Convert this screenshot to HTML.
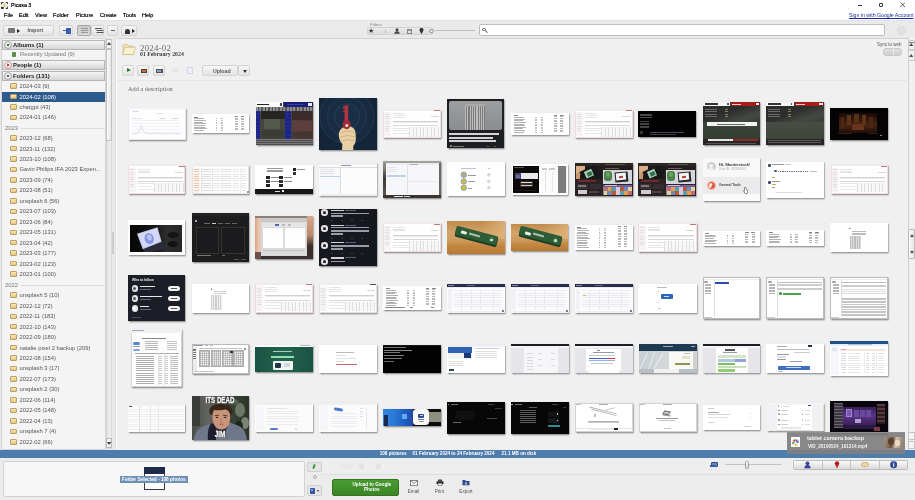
<!DOCTYPE html><html><head><meta charset="utf-8"><title>Picasa 3</title><style>
*{box-sizing:border-box;margin:0;padding:0}
html,body{width:915px;height:500px;overflow:hidden;background:#fff}
body{font-family:"Liberation Sans",sans-serif;font-size:6.5px;color:#222;position:relative;filter:blur(.25px)}
.abs,.abs>*{position:absolute}
#title{left:11px;top:1.2px;font-size:5.3px;color:#000;text-shadow:0 0 .4px #333;line-height:8px}
.menu{top:11px;font-size:6.2px;color:#000;text-shadow:0 0 .4px #444;line-height:8px;transform:scaleX(.9);transform-origin:0 0}
#toolbar{left:0;top:20px;width:915px;height:18px;background:#eaeaea;border-top:1px solid #e2e2e2}
.tb{background:linear-gradient(#f6f6f6,#e4e4e4);border:0.8px solid #d4d4d4;border-radius:2px}
#left{left:0;top:38px;width:115px;height:412px;background:#e9e9ea}
#tree{left:2px;top:1px;width:103px;height:410px;background:#f4f4f4;box-shadow:0 0 0 1px #d6d6d6;overflow:hidden}
.hdr{left:0;width:103px;height:10px;background:linear-gradient(#f6f6f6,#d6d6d6);border:1px solid #b5b5b5;font-weight:bold;font-size:5.9px;line-height:8.3px;padding-left:10px;color:#222}
.it{left:0;width:103px;height:10.4px;font-size:5.8px;line-height:10.4px;padding-left:17.5px;color:#555;white-space:nowrap}
.yr{left:0;width:103px;height:10.4px;font-size:5.8px;line-height:10.4px;padding-left:3px;color:#777}
.fold{left:8px;width:7px;height:5.5px;background:linear-gradient(#f6e6b8,#e6c680);border:0.5px solid #bea060;border-radius:1px}
#main{left:115px;top:38px;width:800px;height:412px;background:#f0f0f1}
.th{box-shadow:0.7px 1px 1.6px rgba(0,0,0,.55);overflow:hidden;background:#fff}
.th>*{position:absolute}
.th{filter:blur(.3px)}
#status{left:0;top:450px;width:915px;height:7.5px;background:#4e7cad}
#bottom{left:0;top:457.5px;width:915px;height:42.5px;background:#ececec}
</style></head><body class="abs">
<svg style="left:1px;top:1.6px" width="7.2" height="7" viewBox="0 0 7.2 7"><rect x="0.6" y="0.6" width="6" height="5.8" fill="#f6f4d8"/><path d="M0.5 2.2 L0.5 0.5 L2.4 0.5 M4.8 0.5 L6.7 0.5 L6.7 2.2 M6.7 4.6 L6.7 6.5 L4.8 6.5 M2.4 6.5 L0.5 6.5 L0.5 4.6" stroke="#2a2a2a" stroke-width="1" fill="none"/><rect x="2.6" y="2.4" width="2" height="2" fill="#b8c070"/><rect x="0.3" y="5" width="2.4" height="1.6" fill="#333"/></svg>
<div id="title">Picasa 3</div>
<div class="menu" style="left:3.6px">File</div>
<div class="menu" style="left:18.6px">Edit</div>
<div class="menu" style="left:34.8px">View</div>
<div class="menu" style="left:53px">Folder</div>
<div class="menu" style="left:75.6px">Picture</div>
<div class="menu" style="left:100px">Create</div>
<div class="menu" style="left:123px">Tools</div>
<div class="menu" style="left:142px">Help</div>
<div style="left:858px;top:5px;width:4px;height:0.8px;background:#333"></div>
<div style="left:878.5px;top:2.5px;width:4px;height:4px;border:0.8px solid #333;border-radius:1px"></div>
<svg style="left:899.5px;top:2.2px" width="5.4" height="5.4" viewBox="0 0 5.4 5.4"><path d="M0.4 0.4 L5 5 M5 0.4 L0.4 5" stroke="#333" stroke-width="0.8"/></svg>
<div style="left:849px;top:12px;font-size:5.2px;line-height:7px;color:#1a2a9a;text-decoration:underline;white-space:nowrap">Sign in with Google Account</div>
<div id="toolbar" class="abs">
<div class="tb abs" style="left:3px;top:3.5px;width:51px;height:11.5px;"><span style="left:23.5px;top:1.8px;font-size:5px;font-weight:bold;color:#555;line-height:7px">Import</span><span style="left:4px;top:2.5px;width:7px;height:5px;background:#777;border-radius:1px"></span><span style="left:12.5px;top:3px;border-left:3px solid #222;border-top:2px solid transparent;border-bottom:2px solid transparent"></span></div>
<div class="tb abs" style="left:59px;top:3.5px;width:13.5px;height:11.5px;"><span style="left:6px;top:2.5px;width:5px;height:5.5px;background:#3b5fae"></span><span style="left:2.5px;top:4.5px;width:3px;height:1px;background:#3b5fae"></span></div>
<div class="tb abs" style="left:77px;top:3.5px;width:13.5px;height:11.5px;background:linear-gradient(#c9c9c9,#dadada);border-color:#aaa"><span style="left:2.5px;top:2.5px;width:7.5px;height:1px;background:#999;box-shadow:0 2px 0 #999,0 4px 0 #999"></span></div>
<div class="tb abs" style="left:90.5px;top:3.5px;width:13px;height:11.5px;"><span style="left:3px;top:2.5px;width:7px;height:1px;background:#555;box-shadow:1.5px 2px 0 #555,1.5px 4px 0 #555"></span></div>
<div class="tb abs" style="left:107px;top:3.5px;width:10.5px;height:11.5px;"><span style="left:3px;top:4.5px;width:3.5px;height:1px;background:#666"></span></div>
<div class="tb abs" style="left:121px;top:3.5px;width:16px;height:11.5px;"><span style="left:3px;top:3px;width:5px;height:5px;background:#333;border-radius:2.5px 2.5px 0 0"></span><span style="left:10px;top:3.5px;border-left:3px solid #222;border-top:2px solid transparent;border-bottom:2px solid transparent"></span></div>
<span style="left:370px;top:0.6px;font-size:4.4px;line-height:5px;color:#888">Filters</span>
<div style="left:367px;top:6px;width:66px;height:8px;background:linear-gradient(#ececec,#dcdcdc);border:0.7px solid #d2d2d2;border-radius:2px"></div>
<span style="left:368.3px;top:5.4px;font-size:6.6px;line-height:9px;color:#333">★</span>
<span style="left:385px;top:8.5px;width:0.8px;height:3px;background:#bbb"></span>
<svg style="left:394px;top:7px" width="6" height="6" viewBox="0 0 6 6"><circle cx="3" cy="1.7" r="1.5" fill="#444"/><path d="M0.3 5.8 Q0.3 3.3 3 3.3 Q5.7 3.3 5.7 5.8 Z" fill="#444"/></svg>
<span style="left:406.5px;top:7.5px;width:5px;height:5px;border:0.8px solid #888;background:repeating-linear-gradient(#999 0 0.8px,transparent 0.8px 1.7px)"></span>
<svg style="left:419px;top:7px" width="5" height="6.5" viewBox="0 0 5 6.5"><path d="M2.5 6.3 L0.7 2.8 A2 2 0 1 1 4.3 2.8 Z" fill="#333"/></svg>
<span style="left:429px;top:7.5px;width:4.5px;height:4.5px;border:0.7px solid #999;border-radius:3px;background:#eee"></span>
<div style="left:434.5px;top:9.3px;width:40.5px;height:1px;background:#bdbdbd"></div>
<div style="left:478.5px;top:3px;width:406.5px;height:12px;background:#fff;border:1px solid #bdbdbd;border-radius:2px"></div>
<span style="left:482px;top:6.5px;width:3.5px;height:3.5px;border:0.9px solid #555;border-radius:2px"></span><span style="left:485px;top:10px;width:2.5px;height:1px;background:#555;transform:rotate(45deg)"></span>
<span style="left:897px;top:5px;width:9px;height:9px;border-radius:5px;background:#e2e2e2;border:1px solid #dadada"></span>
</div>
<div id="left" class="abs"><div id="tree" class="abs">
<div class="hdr" style="top:0.5px">Albums (1)</div>
<svg style="left:1.8px;top:1.5px" width="8" height="8" viewBox="0 0 8 8"><circle cx="4" cy="4" r="3.4" fill="#fcfcfc" stroke="#5a8a4a" stroke-width="0.7"/><path d="M2.3 3.3 L5.7 3.3 L4 5.6 Z" fill="#333"/></svg>
<div class="it" style="top:10.3px;padding-left:18px;color:#777">Recently Updated (9)</div>
<div style="left:9.5px;top:12.5px;width:4.5px;height:5.5px;background:#5e8a4c;border-radius:1px"></div>
<div class="hdr" style="top:21.2px">People (1)</div>
<svg style="left:1.8px;top:22.2px" width="8" height="8" viewBox="0 0 8 8"><circle cx="4" cy="4" r="3.4" fill="#fcfcfc" stroke="#b66" stroke-width="0.7"/><path d="M3.2 2.3 L3.2 5.7 L5.6 4 Z" fill="#b01515"/></svg>
<div class="hdr" style="top:31.6px">Folders (131)</div>
<svg style="left:1.8px;top:32.6px" width="8" height="8" viewBox="0 0 8 8"><circle cx="4" cy="4" r="3.4" fill="#fcfcfc" stroke="#777" stroke-width="0.7"/><path d="M2.3 3.3 L5.7 3.3 L4 5.6 Z" fill="#333"/></svg>
<div class="it" style="top:41.8px;color:#555">2024-03 (9)</div>
<div class="fold" style="top:44.099999999999994px"></div>
<div style="left:0;top:52.8px;width:103px;height:10px;background:#2d5b8e"></div>
<div class="it" style="top:52.5px;color:#fff">2024-02 (108)</div>
<div class="fold" style="top:54.8px"></div>
<div class="it" style="top:63.0px;color:#555">chatgpt (43)</div>
<div class="fold" style="top:65.3px"></div>
<div class="it" style="top:73.3px;color:#555">2024-01 (146)</div>
<div class="fold" style="top:75.6px"></div>
<div class="yr" style="top:83.6px">2023</div><div style="left:19px;top:88.8px;width:84px;height:0.8px;background:#dcdcdc"></div>
<div class="it" style="top:94.1px;color:#555">2023-12 (68)</div>
<div class="fold" style="top:96.39999999999999px"></div>
<div class="it" style="top:104.6px;color:#555">2023-11 (132)</div>
<div class="fold" style="top:106.89999999999999px"></div>
<div class="it" style="top:115.0px;color:#555">2023-10 (108)</div>
<div class="fold" style="top:117.3px"></div>
<div class="it" style="top:125.4px;color:#555">Gavin Philips IFA 2023 Expen...</div>
<div class="fold" style="top:127.7px"></div>
<div class="it" style="top:135.8px;color:#555">2023-09 (74)</div>
<div class="fold" style="top:138.10000000000002px"></div>
<div class="it" style="top:146.2px;color:#555">2023-08 (51)</div>
<div class="fold" style="top:148.5px"></div>
<div class="it" style="top:156.8px;color:#555">unsplash 6 (56)</div>
<div class="fold" style="top:159.10000000000002px"></div>
<div class="it" style="top:167.3px;color:#555">2023-07 (103)</div>
<div class="fold" style="top:169.60000000000002px"></div>
<div class="it" style="top:177.8px;color:#555">2023-06 (84)</div>
<div class="fold" style="top:180.10000000000002px"></div>
<div class="it" style="top:188.2px;color:#555">2023-05 (131)</div>
<div class="fold" style="top:190.5px"></div>
<div class="it" style="top:198.6px;color:#555">2023-04 (42)</div>
<div class="fold" style="top:200.9px"></div>
<div class="it" style="top:209.1px;color:#555">2023-03 (177)</div>
<div class="fold" style="top:211.4px"></div>
<div class="it" style="top:219.6px;color:#555">2023-02 (123)</div>
<div class="fold" style="top:221.9px"></div>
<div class="it" style="top:230.1px;color:#555">2023-01 (100)</div>
<div class="fold" style="top:232.4px"></div>
<div class="yr" style="top:240.7px">2022</div><div style="left:19px;top:245.89999999999998px;width:84px;height:0.8px;background:#dcdcdc"></div>
<div class="it" style="top:251.1px;color:#555">unsplash 5 (10)</div>
<div class="fold" style="top:253.4px"></div>
<div class="it" style="top:261.7px;color:#555">2022-12 (72)</div>
<div class="fold" style="top:264.0px"></div>
<div class="it" style="top:272.2px;color:#555">2022-11 (183)</div>
<div class="fold" style="top:274.5px"></div>
<div class="it" style="top:282.6px;color:#555">2022-10 (143)</div>
<div class="fold" style="top:284.90000000000003px"></div>
<div class="it" style="top:293.1px;color:#555">2022-09 (180)</div>
<div class="fold" style="top:295.40000000000003px"></div>
<div class="it" style="top:303.6px;color:#555">natalie pixel 2 backup (209)</div>
<div class="fold" style="top:305.90000000000003px"></div>
<div class="it" style="top:314.1px;color:#555">2022-08 (154)</div>
<div class="fold" style="top:316.40000000000003px"></div>
<div class="it" style="top:324.4px;color:#555">unsplash 3 (17)</div>
<div class="fold" style="top:326.7px"></div>
<div class="it" style="top:334.8px;color:#555">2022-07 (173)</div>
<div class="fold" style="top:337.1px"></div>
<div class="it" style="top:345.3px;color:#555">unsplash 2 (30)</div>
<div class="fold" style="top:347.6px"></div>
<div class="it" style="top:355.8px;color:#555">2022-06 (114)</div>
<div class="fold" style="top:358.1px"></div>
<div class="it" style="top:366.3px;color:#555">2022-05 (148)</div>
<div class="fold" style="top:368.6px"></div>
<div class="it" style="top:376.8px;color:#555">2022-04 (13)</div>
<div class="fold" style="top:379.1px"></div>
<div class="it" style="top:387.4px;color:#555">unsplash 7 (4)</div>
<div class="fold" style="top:389.7px"></div>
<div class="it" style="top:398.0px;color:#555">2022-02 (66)</div>
<div class="fold" style="top:400.3px"></div>
</div>
<div style="left:105.5px;top:1px;width:6.5px;height:410px;background:linear-gradient(90deg,#e2e2e5,#f1f1f2);border:0.6px solid #d8d8d8"></div>
<div style="left:105.5px;top:11px;width:6.5px;height:92px;background:linear-gradient(90deg,#fbfbfb,#e6e6e6);border:1px solid #c2c2c2"></div>
<div style="left:105.5px;top:1px;width:6.5px;height:10px;background:#f4f4f4;border:1px solid #c2c2c2"></div>
<svg style="left:106.7px;top:4.2px" width="4.2" height="3" viewBox="0 0 4.2 3"><polygon points="0,3 2.1,0 4.2,3" fill="#444"/></svg>
<div style="left:105.5px;top:400px;width:6.5px;height:10px;background:#f4f4f4;border:1px solid #b9b9b9"></div>
<svg style="left:106.7px;top:404px" width="4.2" height="3" viewBox="0 0 4.2 3"><polygon points="0,0 4.2,0 2.1,3" fill="#444"/></svg>
<div style="left:112.3px;top:194px;width:1.6px;height:22px;background:#cdcdcd"></div>
</div>
<div id="main" class="abs">
<div style="left:0;top:0;width:800px;height:0.9px;background:#d2d2d2"></div>
<div style="left:0;top:0;width:1.2px;height:412px;background:#e0e0e1"></div><div style="left:1.2px;top:0;width:1px;height:412px;background:#f8f8f8"></div>
<svg style="left:7px;top:5px" width="15" height="13" viewBox="0 0 15 13"><path d="M1 2.2 L1 11.6 L11.6 11.6 L11.6 3.2 L6.4 3.2 L5.4 1.6 L1.6 1.6 Z" fill="#efe3b4" stroke="#c2ae74" stroke-width="0.6"/><path d="M1 11.6 L2.6 4.6 L13.6 4.2 L11.6 11.6 Z" fill="#f8f0cf" stroke="#c9b77e" stroke-width="0.6"/></svg>
<div style="left:25px;top:4.5px;font-family:'Liberation Serif',serif;font-size:8.8px;line-height:10px;color:#6a6a6a;letter-spacing:.25px">2024-02</div>
<div style="left:25px;top:13px;font-family:'Liberation Serif',serif;font-size:5.8px;line-height:7px;color:#3c3c3c;font-weight:bold">01 February 2024</div>
<div class="tb abs" style="left:6.5px;top:26.5px;width:12px;height:11.5px"><span style="left:4px;top:2.7px;border-left:4px solid #2b7a2b;border-top:2.5px solid transparent;border-bottom:2.5px solid transparent"></span></div>
<div class="tb abs" style="left:22px;top:26.5px;width:12px;height:11.5px"><span style="left:2.5px;top:3px;width:6px;height:4.5px;background:#444"></span><span style="left:3.5px;top:4px;width:4px;height:2px;background:#d9662a"></span></div>
<div class="tb abs" style="left:37.5px;top:26.5px;width:12px;height:11.5px"><span style="left:2px;top:3px;width:7px;height:4.5px;background:#555"></span><span style="left:3.5px;top:4px;width:4px;height:2.5px;background:#8aa0c8"></span></div>
<div style="left:57px;top:29px;width:6px;height:6px;border-radius:3px;background:#e6e6e6"></div>
<div style="left:72px;top:29px;width:6px;height:6.5px;border:0.8px solid #d3d7e2;background:#eef"></div>
<div class="tb abs" style="left:86.5px;top:26.5px;width:36.8px;height:11.5px"><span style="left:10.5px;top:2px;font-size:5.2px;line-height:6.5px;font-weight:bold;color:#555">Upload</span></div>
<div class="tb abs" style="left:123.30000000000001px;top:26.5px;width:12px;height:11.5px"><span style="left:3.5px;top:4.2px;border-top:3px solid #333;border-left:2.3px solid transparent;border-right:2.3px solid transparent"></span></div>
<div style="left:13px;top:46.5px;font-family:'Liberation Serif',serif;font-size:6.3px;line-height:8px;color:#666">Add a description</div>
<div style="left:1.5px;top:42px;width:790px;height:0.8px;background:#e6e6e7"></div>
<div style="left:762px;top:3.799999999999997px;font-size:4.5px;line-height:6px;color:#555;white-space:nowrap">Sync to web</div>
<div style="left:768.2px;top:9.5px;width:19.3px;height:8.2px;border-radius:3px;background:linear-gradient(#e0e0e0,#cfcfcf);border:0.7px solid #c8c8c8"></div>
<div style="left:777.6px;top:10.200000000000003px;width:0.7px;height:6.8px;background:#ececec"></div>
<div style="left:792.5px;top:0;width:7.5px;height:412px;background:#f0f0f0;border-left:1px solid #d1d1d1"></div>
<div style="left:793px;top:1.5px;width:7px;height:10.5px;background:#f2f2f2;border:0.8px solid #cbcbcb"></div>
<div style="left:793px;top:12px;width:7px;height:11px;background:#f2f2f2;border:0.8px solid #cbcbcb"></div>
<svg style="left:794.4px;top:5px" width="4.4" height="3" viewBox="0 0 4.4 3"><polygon points="0,3 2.2,0 4.4,3" fill="#555"/></svg><div style="left:794.4px;top:3.6000000000000014px;width:4.4px;height:0.7px;background:#777"></div>
<svg style="left:794.4px;top:16px" width="4.4" height="3" viewBox="0 0 4.4 3"><polygon points="0,3 2.2,0 4.4,3" fill="#555"/></svg>
<div style="left:793px;top:191px;width:7px;height:30px;background:linear-gradient(90deg,#fbfbfb,#e4e4e4);border:0.8px solid #bcbcbc;border-radius:1px"></div>
<svg style="left:794.6px;top:196px" width="4" height="3" viewBox="0 0 4 3"><polygon points="0,3 2.0,0 4,3" fill="#555"/></svg>
<svg style="left:794.6px;top:213px" width="4" height="3" viewBox="0 0 4 3"><polygon points="0,0 4,0 2.0,3" fill="#555"/></svg>
<div style="left:793px;top:394px;width:7px;height:8px;background:#f4f4f4;border:0.8px solid #c4c4c4"></div>
<div style="left:793px;top:403px;width:7px;height:8px;background:#f4f4f4;border:0.8px solid #c4c4c4"></div>
<div class="th" style="left:13px;top:69.8px;width:57.5px;height:32.0px;background:#fdfdfe;"><i style="left:0px;top:0px;width:57.5px;height:32px;background:#fdfdfe;border:0.5px solid #e6e6f0"></i><i style="left:0px;top:0px;width:57.5px;height:2px;background:#f6f6fa;"></i><i style="left:4px;top:3.2px;width:7px;height:0.8px;background:#d8d8e4;"></i><i style="left:28px;top:5.5px;width:8px;height:0.8px;background:#e4e4ee;"></i><i style="left:4px;top:12px;width:48px;height:0.6px;background:#f1f1f6;"></i><i style="left:4px;top:15px;width:48px;height:0.6px;background:#f1f1f6;"></i><i style="left:4px;top:18px;width:48px;height:0.6px;background:#f1f1f6;"></i><i style="left:4px;top:21px;width:48px;height:0.6px;background:#f1f1f6;"></i><i style="left:4px;top:24px;width:48px;height:0.6px;background:#f1f1f6;"></i><svg style="left:3px;top:9px" width="52" height="19" viewBox="0 0 52 19"><path d="M1 17 L7 16.5 L9 12 L10.5 8.5 L12 13 L14 16 L18 17 L24 16.3 L30 17 L40 16.6 L50 17" fill="none" stroke="#cfd3ea" stroke-width="0.7"/></svg><i style="left:32px;top:10.5px;width:5px;height:0.8px;background:#d4d4e0;"></i><i style="left:44px;top:10.5px;width:6px;height:0.8px;background:#d4d4e0;"></i><i style="left:4px;top:10.5px;width:10px;height:0.8px;background:#e0e0ea;"></i></div>
<div class="th" style="left:77px;top:76.4px;width:57px;height:18.6px;background:#fff;"><i style="left:2.4px;top:2.2px;width:4px;height:0.8px;background:#8a8a8a;"></i><i style="left:2.4px;top:3.9px;width:10px;height:0.75px;background:#b2b2b2;"></i><i style="left:2.4px;top:5.55px;width:11.5px;height:0.75px;background:#b2b2b2;"></i><i style="left:2.4px;top:7.199999999999999px;width:9px;height:0.75px;background:#b2b2b2;"></i><i style="left:2.4px;top:8.85px;width:12px;height:0.75px;background:#b2b2b2;"></i><i style="left:2.4px;top:10.5px;width:10.5px;height:0.75px;background:#b2b2b2;"></i><i style="left:2.4px;top:12.15px;width:11px;height:0.75px;background:#b2b2b2;"></i><i style="left:2.4px;top:13.799999999999999px;width:12.5px;height:0.75px;background:#b2b2b2;"></i><i style="left:2.4px;top:15.45px;width:9.5px;height:0.75px;background:#b2b2b2;"></i><i style="left:24px;top:3.9px;width:1.4px;height:0.75px;background:#bcbcbc;"></i><i style="left:24px;top:5.55px;width:1.4px;height:0.75px;background:#bcbcbc;"></i><i style="left:24px;top:7.199999999999999px;width:1.4px;height:0.75px;background:#bcbcbc;"></i><i style="left:24px;top:8.85px;width:1.4px;height:0.75px;background:#bcbcbc;"></i><i style="left:24px;top:10.5px;width:1.4px;height:0.75px;background:#bcbcbc;"></i><i style="left:24px;top:12.15px;width:1.4px;height:0.75px;background:#bcbcbc;"></i><i style="left:24px;top:13.799999999999999px;width:1.4px;height:0.75px;background:#bcbcbc;"></i><i style="left:24px;top:15.45px;width:1.4px;height:0.75px;background:#bcbcbc;"></i><i style="left:29.3px;top:3.9px;width:2.2px;height:0.75px;background:#bcbcbc;"></i><i style="left:29.3px;top:5.55px;width:2.2px;height:0.75px;background:#bcbcbc;"></i><i style="left:29.3px;top:7.199999999999999px;width:2.2px;height:0.75px;background:#bcbcbc;"></i><i style="left:29.3px;top:8.85px;width:2.2px;height:0.75px;background:#bcbcbc;"></i><i style="left:29.3px;top:10.5px;width:2.2px;height:0.75px;background:#bcbcbc;"></i><i style="left:29.3px;top:12.15px;width:2.2px;height:0.75px;background:#bcbcbc;"></i><i style="left:29.3px;top:13.799999999999999px;width:2.2px;height:0.75px;background:#bcbcbc;"></i><i style="left:29.3px;top:15.45px;width:2.2px;height:0.75px;background:#bcbcbc;"></i><i style="left:42.6px;top:1.6px;width:3.4px;height:0.8px;background:#8a8a8a;"></i><i style="left:48.7px;top:1.6px;width:3.8px;height:0.8px;background:#8a8a8a;"></i><i style="left:42.8px;top:3.3px;width:2.8px;height:0.75px;background:#b8b8b8;"></i><i style="left:42.8px;top:4.949999999999999px;width:2.8px;height:0.75px;background:#b8b8b8;"></i><i style="left:42.8px;top:6.6px;width:2.8px;height:0.75px;background:#b8b8b8;"></i><i style="left:42.8px;top:8.25px;width:2.8px;height:0.75px;background:#b8b8b8;"></i><i style="left:42.8px;top:9.899999999999999px;width:2.8px;height:0.75px;background:#b8b8b8;"></i><i style="left:42.8px;top:11.55px;width:2.8px;height:0.75px;background:#b8b8b8;"></i><i style="left:42.8px;top:13.2px;width:2.8px;height:0.75px;background:#b8b8b8;"></i><i style="left:42.8px;top:14.849999999999998px;width:2.8px;height:0.75px;background:#b8b8b8;"></i><i style="left:49px;top:3.3px;width:3px;height:0.75px;background:#b8b8b8;"></i><i style="left:49px;top:4.949999999999999px;width:3px;height:0.75px;background:#b8b8b8;"></i><i style="left:49px;top:6.6px;width:3px;height:0.75px;background:#b8b8b8;"></i><i style="left:49px;top:8.25px;width:3px;height:0.75px;background:#b8b8b8;"></i><i style="left:49px;top:9.899999999999999px;width:3px;height:0.75px;background:#b8b8b8;"></i><i style="left:49px;top:11.55px;width:3px;height:0.75px;background:#b8b8b8;"></i><i style="left:49px;top:13.2px;width:3px;height:0.75px;background:#b8b8b8;"></i><i style="left:49px;top:14.849999999999998px;width:3px;height:0.75px;background:#b8b8b8;"></i></div>
<div class="th" style="left:140.5px;top:64.2px;width:57.5px;height:42.6px;background:#44453f;"><i style="left:0px;top:0px;width:57.5px;height:42.6px;background:#46473f;background:linear-gradient(90deg,#43453d 55%,#553a38 80%,#4a3836)"></i><i style="left:0px;top:5.2px;width:57.5px;height:3.2px;background:#7a7a7c;background:repeating-linear-gradient(90deg,#8c8c8e 0 2px,#55565a 2px 3.4px)"></i><i style="left:5px;top:8.4px;width:24px;height:8px;background:#252624;"></i><i style="left:8px;top:17px;width:16px;height:10px;background:#55584c;"></i><i style="left:6px;top:28px;width:22px;height:8px;background:#3a3c36;"></i><i style="left:36px;top:9px;width:20px;height:9px;background:#3a2c2c;"></i><i style="left:37px;top:19px;width:19px;height:10px;background:#5e3e3c;"></i><i style="left:36px;top:30px;width:20px;height:6px;background:#453634;"></i><i style="left:0.5px;top:9px;width:4.3px;height:27.4px;background:#1f2890;background:repeating-linear-gradient(#232c98 0 1.2px,#1a217c 1.2px 2.4px)"></i><i style="left:29.6px;top:9px;width:5.6px;height:27.4px;background:#1f2890;background:repeating-linear-gradient(#232c98 0 1.2px,#1a217c 1.2px 2.4px)"></i><i style="left:0px;top:0px;width:27.6px;height:5.2px;background:#fbfbfb;"></i><i style="left:1.6px;top:1.6px;width:12px;height:1.7px;background:#222;"></i><i style="left:24.8px;top:1.3px;width:1.6px;height:2.4px;background:#445;"></i><i style="left:28.6px;top:0px;width:28.9px;height:5.2px;background:#1b1f78;"></i><i style="left:31px;top:2px;width:17px;height:1.2px;background:#3a3f9a;"></i><i style="left:52px;top:1px;width:4.2px;height:3px;background:#eef;"></i><i style="left:0px;top:36.4px;width:57.5px;height:6.2px;background:#5c5d5a;background:repeating-linear-gradient(#77787a 0 0.9px,#4c4d4a 0.9px 2px)"></i></div>
<div class="th" style="left:204.3px;top:59.7px;width:57.4px;height:52.6px;background:#15263a;"><svg style="left:0;top:0" width="57.4" height="52.6" viewBox="0 0 57.4 52.6"><rect width="57.4" height="52.6" fill="#14253a"/><circle cx="27.9" cy="18.6" r="27" fill="#172a40" stroke="#1e3349" stroke-width="1.4"/><circle cx="27.9" cy="18.6" r="19.5" fill="#182c42" stroke="#20364d" stroke-width="1.4"/><circle cx="27.9" cy="18.6" r="12.5" fill="#1a2f46" stroke="#223a52" stroke-width="1.4"/><path d="M23 52.6 L23.4 46 Q19.6 42 19.8 36.5 Q20 32 24 29.6 L31.5 28.6 Q36 30 36.6 35 L36.9 41 Q36.5 46 34.2 48 L34.4 52.6 Z" fill="#e8cfa4"/><path d="M22 35 Q28 31.5 35.5 34.5 M21.5 39 Q28 36 35.8 38.8 M22.5 43 Q28 40.4 35 42.6" stroke="#c9a880" stroke-width="0.8" fill="none"/><rect x="25.6" y="7" width="3.6" height="18" rx="1.2" fill="#b5333e"/><rect x="24" y="8.6" width="2.6" height="2" fill="#b5333e"/><rect x="24.2" y="12.4" width="2.2" height="1.8" fill="#b5333e"/><ellipse cx="27.6" cy="26.6" rx="4" ry="4.6" fill="#a82a36"/><circle cx="27.8" cy="27.4" r="1.5" fill="#f0e2dc"/></svg></div>
<div class="th" style="left:268.4px;top:71.6px;width:57.5px;height:28.2px;background:#fff;"><i style="left:0px;top:0px;width:57.5px;height:28.2px;background:#fefefe;border:0.5px solid #eedede"></i><i style="left:0px;top:0px;width:57.5px;height:1.1px;background:#f4e8e8;"></i><i style="left:51.0px;top:0.2px;width:6px;height:1.2px;background:#c87878;"></i><i style="left:1px;top:2.5px;width:6.5px;height:24.2px;background:#f5f3f3;"></i><i style="left:2px;top:4.0px;width:4px;height:0.6px;background:#e6dada;"></i><i style="left:2px;top:6.4px;width:4px;height:0.6px;background:#e6dada;"></i><i style="left:2px;top:8.8px;width:4px;height:0.6px;background:#e6dada;"></i><i style="left:2px;top:11.2px;width:4px;height:0.6px;background:#e6dada;"></i><i style="left:2px;top:13.6px;width:4px;height:0.6px;background:#e6dada;"></i><i style="left:2px;top:16.0px;width:4px;height:0.6px;background:#e6dada;"></i><i style="left:2px;top:18.4px;width:4px;height:0.6px;background:#e6dada;"></i><i style="left:2px;top:20.8px;width:4px;height:0.6px;background:#e6dada;"></i><i style="left:9.5px;top:3.5px;width:12px;height:0.6px;background:#e4e4e4;"></i><i style="left:9.5px;top:5.3px;width:12px;height:0.6px;background:#e4e4e4;"></i><i style="left:9.5px;top:7.1px;width:12px;height:0.6px;background:#e4e4e4;"></i><i style="left:9.5px;top:11.280000000000001px;width:45.5px;height:0.8px;background:#d2d2d2;"></i><i style="left:9.5px;top:12.48px;width:45.5px;height:0.6px;background:#ececec;"></i><i style="left:9.5px;top:15.792000000000002px;width:45.5px;height:0.8px;background:#d8d8d8;"></i><i style="left:9.5px;top:18.048px;width:17.25px;height:0.6px;background:#e4e4e4;"></i><i style="left:9.5px;top:20.868px;width:14.375px;height:0.6px;background:#e8e8e8;"></i><i style="left:9.5px;top:23.688px;width:17.25px;height:0.6px;background:#e8e8e8;"></i><i style="left:25.875px;top:17.483999999999998px;width:29.900000000000002px;height:9.588000000000001px;background:#f4f4f4;background:repeating-linear-gradient(90deg,#dedede 0 1px,#f8f8f8 1px 3.6px)"></i><i style="left:47.15px;top:6.204px;width:8px;height:0.7px;background:#d8d8d8;"></i></div>
<div class="th" style="left:332.2px;top:61.2px;width:57.0px;height:48.8px;background:#1d1e21;"><i style="left:1.9px;top:2px;width:53px;height:28.8px;background:#939597;border-radius:2px;background:linear-gradient(#9c9ea0,#8a8c8e)"></i><i style="left:17.8px;top:4.6px;width:19.7px;height:26.2px;background:#a8a8a8;background:repeating-linear-gradient(90deg,#bcbcbc 0 1.1px,#7c7c7c 1.1px 2.3px)"></i><i style="left:17.8px;top:4.6px;width:19.7px;height:2px;background:#aaa;"></i><i style="left:1.9px;top:33.8px;width:50px;height:2px;background:#d4d4d4;"></i><i style="left:1.9px;top:37.6px;width:44px;height:2px;background:#d4d4d4;"></i><i style="left:1.9px;top:41.1px;width:47px;height:2px;background:#d4d4d4;"></i><i style="left:2.5px;top:46.3px;width:2px;height:1.4px;background:#aaa;border-radius:1px"></i><i style="left:5.5px;top:46.6px;width:11px;height:0.8px;background:#777;"></i><i style="left:40px;top:46.6px;width:2px;height:0.8px;background:#555;"></i><i style="left:47px;top:46.6px;width:2px;height:0.8px;background:#555;"></i></div>
<div class="th" style="left:396.3px;top:75px;width:57.5px;height:21.7px;background:#fff;"><i style="left:2.4px;top:2.2px;width:4px;height:0.8px;background:#8a8a8a;"></i><i style="left:2.4px;top:3.9px;width:10px;height:0.75px;background:#b2b2b2;"></i><i style="left:2.4px;top:5.55px;width:11.5px;height:0.75px;background:#b2b2b2;"></i><i style="left:2.4px;top:7.199999999999999px;width:9px;height:0.75px;background:#b2b2b2;"></i><i style="left:2.4px;top:8.85px;width:12px;height:0.75px;background:#b2b2b2;"></i><i style="left:2.4px;top:10.5px;width:10.5px;height:0.75px;background:#b2b2b2;"></i><i style="left:2.4px;top:12.15px;width:11px;height:0.75px;background:#b2b2b2;"></i><i style="left:2.4px;top:13.799999999999999px;width:12.5px;height:0.75px;background:#b2b2b2;"></i><i style="left:2.4px;top:15.45px;width:9.5px;height:0.75px;background:#b2b2b2;"></i><i style="left:2.4px;top:17.099999999999998px;width:11px;height:0.75px;background:#b2b2b2;"></i><i style="left:2.4px;top:18.75px;width:10px;height:0.75px;background:#b2b2b2;"></i><i style="left:24px;top:3.9px;width:1.4px;height:0.75px;background:#bcbcbc;"></i><i style="left:24px;top:5.55px;width:1.4px;height:0.75px;background:#bcbcbc;"></i><i style="left:24px;top:7.199999999999999px;width:1.4px;height:0.75px;background:#bcbcbc;"></i><i style="left:24px;top:8.85px;width:1.4px;height:0.75px;background:#bcbcbc;"></i><i style="left:24px;top:10.5px;width:1.4px;height:0.75px;background:#bcbcbc;"></i><i style="left:24px;top:12.15px;width:1.4px;height:0.75px;background:#bcbcbc;"></i><i style="left:24px;top:13.799999999999999px;width:1.4px;height:0.75px;background:#bcbcbc;"></i><i style="left:24px;top:15.45px;width:1.4px;height:0.75px;background:#bcbcbc;"></i><i style="left:24px;top:17.099999999999998px;width:1.4px;height:0.75px;background:#bcbcbc;"></i><i style="left:24px;top:18.75px;width:1.4px;height:0.75px;background:#bcbcbc;"></i><i style="left:29.3px;top:3.9px;width:2.2px;height:0.75px;background:#bcbcbc;"></i><i style="left:29.3px;top:5.55px;width:2.2px;height:0.75px;background:#bcbcbc;"></i><i style="left:29.3px;top:7.199999999999999px;width:2.2px;height:0.75px;background:#bcbcbc;"></i><i style="left:29.3px;top:8.85px;width:2.2px;height:0.75px;background:#bcbcbc;"></i><i style="left:29.3px;top:10.5px;width:2.2px;height:0.75px;background:#bcbcbc;"></i><i style="left:29.3px;top:12.15px;width:2.2px;height:0.75px;background:#bcbcbc;"></i><i style="left:29.3px;top:13.799999999999999px;width:2.2px;height:0.75px;background:#bcbcbc;"></i><i style="left:29.3px;top:15.45px;width:2.2px;height:0.75px;background:#bcbcbc;"></i><i style="left:29.3px;top:17.099999999999998px;width:2.2px;height:0.75px;background:#bcbcbc;"></i><i style="left:29.3px;top:18.75px;width:2.2px;height:0.75px;background:#bcbcbc;"></i><i style="left:42.6px;top:1.6px;width:3.4px;height:0.8px;background:#8a8a8a;"></i><i style="left:48.7px;top:1.6px;width:3.8px;height:0.8px;background:#8a8a8a;"></i><i style="left:42.8px;top:3.3px;width:2.8px;height:0.75px;background:#b8b8b8;"></i><i style="left:42.8px;top:4.949999999999999px;width:2.8px;height:0.75px;background:#b8b8b8;"></i><i style="left:42.8px;top:6.6px;width:2.8px;height:0.75px;background:#b8b8b8;"></i><i style="left:42.8px;top:8.25px;width:2.8px;height:0.75px;background:#b8b8b8;"></i><i style="left:42.8px;top:9.899999999999999px;width:2.8px;height:0.75px;background:#b8b8b8;"></i><i style="left:42.8px;top:11.55px;width:2.8px;height:0.75px;background:#b8b8b8;"></i><i style="left:42.8px;top:13.2px;width:2.8px;height:0.75px;background:#b8b8b8;"></i><i style="left:42.8px;top:14.849999999999998px;width:2.8px;height:0.75px;background:#b8b8b8;"></i><i style="left:42.8px;top:16.5px;width:2.8px;height:0.75px;background:#b8b8b8;"></i><i style="left:42.8px;top:18.15px;width:2.8px;height:0.75px;background:#b8b8b8;"></i><i style="left:49px;top:3.3px;width:3px;height:0.75px;background:#b8b8b8;"></i><i style="left:49px;top:4.949999999999999px;width:3px;height:0.75px;background:#b8b8b8;"></i><i style="left:49px;top:6.6px;width:3px;height:0.75px;background:#b8b8b8;"></i><i style="left:49px;top:8.25px;width:3px;height:0.75px;background:#b8b8b8;"></i><i style="left:49px;top:9.899999999999999px;width:3px;height:0.75px;background:#b8b8b8;"></i><i style="left:49px;top:11.55px;width:3px;height:0.75px;background:#b8b8b8;"></i><i style="left:49px;top:13.2px;width:3px;height:0.75px;background:#b8b8b8;"></i><i style="left:49px;top:14.849999999999998px;width:3px;height:0.75px;background:#b8b8b8;"></i><i style="left:49px;top:16.5px;width:3px;height:0.75px;background:#b8b8b8;"></i><i style="left:49px;top:18.15px;width:3px;height:0.75px;background:#b8b8b8;"></i></div>
<div class="th" style="left:460px;top:71.6px;width:57.7px;height:28.2px;background:#fff;"><i style="left:0px;top:0px;width:57.7px;height:28.2px;background:#fefefe;border:0.5px solid #eedede"></i><i style="left:0px;top:0px;width:57.7px;height:1.1px;background:#f4e8e8;"></i><i style="left:51.2px;top:0.2px;width:6px;height:1.2px;background:#c87878;"></i><i style="left:1px;top:2.5px;width:6.5px;height:24.2px;background:#f5f3f3;"></i><i style="left:2px;top:4.0px;width:4px;height:0.6px;background:#e6dada;"></i><i style="left:2px;top:6.4px;width:4px;height:0.6px;background:#e6dada;"></i><i style="left:2px;top:8.8px;width:4px;height:0.6px;background:#e6dada;"></i><i style="left:2px;top:11.2px;width:4px;height:0.6px;background:#e6dada;"></i><i style="left:2px;top:13.6px;width:4px;height:0.6px;background:#e6dada;"></i><i style="left:2px;top:16.0px;width:4px;height:0.6px;background:#e6dada;"></i><i style="left:2px;top:18.4px;width:4px;height:0.6px;background:#e6dada;"></i><i style="left:2px;top:20.8px;width:4px;height:0.6px;background:#e6dada;"></i><i style="left:9.5px;top:3.5px;width:12px;height:0.6px;background:#e4e4e4;"></i><i style="left:9.5px;top:5.3px;width:12px;height:0.6px;background:#e4e4e4;"></i><i style="left:9.5px;top:7.1px;width:12px;height:0.6px;background:#e4e4e4;"></i><i style="left:9.5px;top:11.280000000000001px;width:45.7px;height:0.8px;background:#d2d2d2;"></i><i style="left:9.5px;top:12.48px;width:45.7px;height:0.6px;background:#ececec;"></i><i style="left:9.5px;top:15.792000000000002px;width:45.7px;height:0.8px;background:#d8d8d8;"></i><i style="left:9.5px;top:18.048px;width:17.31px;height:0.6px;background:#e4e4e4;"></i><i style="left:9.5px;top:20.868px;width:14.425px;height:0.6px;background:#e8e8e8;"></i><i style="left:9.5px;top:23.688px;width:17.31px;height:0.6px;background:#e8e8e8;"></i><i style="left:25.965000000000003px;top:17.483999999999998px;width:30.004px;height:9.588000000000001px;background:#f4f4f4;background:repeating-linear-gradient(90deg,#dedede 0 1px,#f8f8f8 1px 3.6px)"></i><i style="left:47.314px;top:6.204px;width:8px;height:0.7px;background:#d8d8d8;"></i></div>
<div class="th" style="left:523.4px;top:73px;width:57.6px;height:26.4px;background:#020202;"><i style="left:2px;top:2.6px;width:12px;height:0.7px;background:#4a4a4a;"></i><i style="left:2px;top:4.2px;width:12px;height:0.7px;background:#4a4a4a;"></i><i style="left:2px;top:5.800000000000001px;width:12px;height:0.7px;background:#4a4a4a;"></i><i style="left:2px;top:10.0px;width:9px;height:0.7px;background:#444;"></i><i style="left:2px;top:11.6px;width:9px;height:0.7px;background:#444;"></i><i style="left:2px;top:13.2px;width:9px;height:0.7px;background:#444;"></i><i style="left:2px;top:14.8px;width:9px;height:0.7px;background:#444;"></i><i style="left:2px;top:16.4px;width:9px;height:0.7px;background:#444;"></i><i style="left:2px;top:19.5px;width:3px;height:3px;background:#333;"></i><i style="left:12px;top:21px;width:34px;height:0.7px;background:#4a4a55;"></i><i style="left:12px;top:22.8px;width:26px;height:0.7px;background:#3a3a44;"></i></div>
<div class="th" style="left:587.6px;top:64px;width:57.4px;height:42.8px;background:#3a3d3a;"><i style="left:0px;top:0px;width:57.4px;height:42.8px;background:#3a3d3a;"></i><i style="left:0px;top:4.4px;width:57.4px;height:15.6px;background:#2f302e;background:linear-gradient(160deg,#2c2d2c 40%,#454842 75%,#3a3c38)"></i><i style="left:0px;top:20px;width:57.4px;height:16.5px;background:#3e483a;background:linear-gradient(#3c433a,#363d33)"></i><i style="left:2px;top:7.0px;width:12px;height:0.8px;background:#6a6c66;"></i><i style="left:2px;top:9.4px;width:12px;height:0.8px;background:#6a6c66;"></i><i style="left:2px;top:11.8px;width:12px;height:0.8px;background:#6a6c66;"></i><i style="left:2px;top:14.2px;width:12px;height:0.8px;background:#6a6c66;"></i><i style="left:22px;top:7.0px;width:3px;height:0.8px;background:#8a8060;"></i><i style="left:22px;top:9.4px;width:3px;height:0.8px;background:#8a8060;"></i><i style="left:22px;top:11.8px;width:3px;height:0.8px;background:#8a8060;"></i><i style="left:22px;top:14.2px;width:3px;height:0.8px;background:#8a8060;"></i><i style="left:0px;top:0px;width:27.264999999999997px;height:4.4px;background:#f6f6f6;"></i><i style="left:2px;top:1.4px;width:13px;height:1.5px;background:#333;"></i><i style="left:24.5px;top:1.2px;width:1.6px;height:2px;background:#555;"></i><i style="left:28.413px;top:0px;width:24.395px;height:4.4px;background:#a51e1a;"></i><i style="left:29.848px;top:1.5px;width:9px;height:1.4px;background:#f0d0d0;"></i><i style="left:52.808px;top:0px;width:4.592px;height:4.4px;background:#8a1c18;"></i><i style="left:53.095px;top:0.8px;width:3.4px;height:2.6px;background:#f4ecec;"></i><i style="left:4px;top:20px;width:50px;height:4px;background:#f4f4f4;"></i><i style="left:14px;top:21.5px;width:28px;height:1px;background:#666;"></i><i style="left:0px;top:36.5px;width:57.4px;height:6.299999999999997px;background:#2a2524;"></i><i style="left:5.5px;top:37.4px;width:25px;height:2px;background:#e4e4e4;"></i><i style="left:30.5px;top:37.4px;width:25px;height:2px;background:#8e2a26;"></i><i style="left:3px;top:40.5px;width:50px;height:0.7px;background:#555;"></i></div>
<div class="th" style="left:651.2px;top:64px;width:57.6px;height:42.8px;background:#3a3d3a;"><i style="left:0px;top:0px;width:57.6px;height:42.8px;background:#3a3d3a;"></i><i style="left:0px;top:4.4px;width:57.6px;height:15.6px;background:#2f302e;background:linear-gradient(160deg,#2c2d2c 40%,#454842 75%,#3a3c38)"></i><i style="left:0px;top:20px;width:57.6px;height:16.5px;background:#3e483a;background:linear-gradient(#474d44,#3e453b)"></i><i style="left:2px;top:7.0px;width:12px;height:0.8px;background:#6a6c66;"></i><i style="left:2px;top:9.4px;width:12px;height:0.8px;background:#6a6c66;"></i><i style="left:2px;top:11.8px;width:12px;height:0.8px;background:#6a6c66;"></i><i style="left:2px;top:14.2px;width:12px;height:0.8px;background:#6a6c66;"></i><i style="left:22px;top:7.0px;width:3px;height:0.8px;background:#8a8060;"></i><i style="left:22px;top:9.4px;width:3px;height:0.8px;background:#8a8060;"></i><i style="left:22px;top:11.8px;width:3px;height:0.8px;background:#8a8060;"></i><i style="left:22px;top:14.2px;width:3px;height:0.8px;background:#8a8060;"></i><i style="left:0px;top:0px;width:27.36px;height:4.4px;background:#f6f6f6;"></i><i style="left:2px;top:1.4px;width:13px;height:1.5px;background:#333;"></i><i style="left:24.5px;top:1.2px;width:1.6px;height:2px;background:#555;"></i><i style="left:28.512px;top:0px;width:24.48px;height:4.4px;background:#a51e1a;"></i><i style="left:29.952px;top:1.5px;width:9px;height:1.4px;background:#f0d0d0;"></i><i style="left:52.992000000000004px;top:0px;width:4.6080000000000005px;height:4.4px;background:#8a1c18;"></i><i style="left:53.28px;top:0.8px;width:3.4px;height:2.6px;background:#f4ecec;"></i><i style="left:0px;top:36.5px;width:57.6px;height:6.299999999999997px;background:#2a2524;"></i><i style="left:2px;top:38.0px;width:53px;height:0.8px;background:#5a5a56;"></i><i style="left:2px;top:39.8px;width:53px;height:0.8px;background:#5a5a56;"></i></div>
<div class="th" style="left:715.3px;top:69.6px;width:57.5px;height:32.2px;background:#050303;"><i style="left:9px;top:5px;width:38px;height:20px;background:#2a140c;background:linear-gradient(#180a06,#4a2412 60%,#1c0e0a)"></i><i style="left:11px;top:9px;width:3px;height:12px;background:#4a2814;"></i><i style="left:17px;top:7px;width:4px;height:10px;background:#5e3418;"></i><i style="left:24px;top:6px;width:5px;height:9px;background:#553018;"></i><i style="left:32px;top:7px;width:4px;height:10px;background:#5e3418;"></i><i style="left:39px;top:9px;width:4px;height:11px;background:#4a2814;"></i><i style="left:22px;top:16px;width:12px;height:6px;background:#6a341c;border-radius:3px 3px 0 0"></i><i style="left:8px;top:25px;width:14px;height:1px;background:#3a1c12;"></i><i style="left:38px;top:25px;width:10px;height:1px;background:#3a1c12;"></i><i style="left:50px;top:27px;width:1.5px;height:1.5px;background:#999;border-radius:1px"></i></div>
<div class="th" style="left:13px;top:127.4px;width:57.4px;height:28.2px;background:#fff;"><i style="left:0px;top:0px;width:57.4px;height:28.2px;background:#fefefe;border:0.5px solid #eedede"></i><i style="left:0px;top:0px;width:57.4px;height:1.1px;background:#f4e8e8;"></i><i style="left:50.9px;top:0.2px;width:6px;height:1.2px;background:#c87878;"></i><i style="left:1px;top:2.5px;width:6.5px;height:24.2px;background:#f5f3f3;"></i><i style="left:2px;top:4.0px;width:4px;height:0.6px;background:#e6dada;"></i><i style="left:2px;top:6.4px;width:4px;height:0.6px;background:#e6dada;"></i><i style="left:2px;top:8.8px;width:4px;height:0.6px;background:#e6dada;"></i><i style="left:2px;top:11.2px;width:4px;height:0.6px;background:#e6dada;"></i><i style="left:2px;top:13.6px;width:4px;height:0.6px;background:#e6dada;"></i><i style="left:2px;top:16.0px;width:4px;height:0.6px;background:#e6dada;"></i><i style="left:2px;top:18.4px;width:4px;height:0.6px;background:#e6dada;"></i><i style="left:2px;top:20.8px;width:4px;height:0.6px;background:#e6dada;"></i><i style="left:9.5px;top:3.5px;width:12px;height:0.6px;background:#e4e4e4;"></i><i style="left:9.5px;top:5.3px;width:12px;height:0.6px;background:#e4e4e4;"></i><i style="left:9.5px;top:7.1px;width:12px;height:0.6px;background:#e4e4e4;"></i><i style="left:9.5px;top:11.280000000000001px;width:45.4px;height:0.8px;background:#d2d2d2;"></i><i style="left:9.5px;top:12.48px;width:45.4px;height:0.6px;background:#ececec;"></i><i style="left:9.5px;top:15.792000000000002px;width:45.4px;height:0.8px;background:#d8d8d8;"></i><i style="left:9.5px;top:18.048px;width:17.22px;height:0.6px;background:#e4e4e4;"></i><i style="left:9.5px;top:20.868px;width:14.35px;height:0.6px;background:#e8e8e8;"></i><i style="left:9.5px;top:23.688px;width:17.22px;height:0.6px;background:#e8e8e8;"></i><i style="left:25.83px;top:17.483999999999998px;width:29.848px;height:9.588000000000001px;background:#f4f4f4;background:repeating-linear-gradient(90deg,#dedede 0 1px,#f8f8f8 1px 3.6px)"></i><i style="left:47.068px;top:6.204px;width:8px;height:0.7px;background:#d8d8d8;"></i></div>
<div class="th" style="left:77px;top:127.4px;width:57.3px;height:28.2px;background:#fff;"><i style="left:0px;top:0px;width:57.3px;height:28.2px;background:#fefefe;border:0.5px solid #e2e2e2"></i><i style="left:0px;top:0px;width:57.3px;height:1.4px;background:#f0f0f0;"></i><i style="left:1px;top:2.4px;width:7px;height:25px;background:#fbf3ec;"></i><i style="left:1.8px;top:3.6px;width:5px;height:0.6px;background:#ecc8ac;"></i><i style="left:1.8px;top:5.9px;width:5px;height:0.6px;background:#ecc8ac;"></i><i style="left:1.8px;top:8.2px;width:5px;height:0.6px;background:#ecc8ac;"></i><i style="left:1.8px;top:10.5px;width:5px;height:0.6px;background:#ecc8ac;"></i><i style="left:1.8px;top:12.799999999999999px;width:5px;height:0.6px;background:#ecc8ac;"></i><i style="left:1.8px;top:15.1px;width:5px;height:0.6px;background:#ecc8ac;"></i><i style="left:1.8px;top:17.4px;width:5px;height:0.6px;background:#ecc8ac;"></i><i style="left:1.8px;top:19.7px;width:5px;height:0.6px;background:#ecc8ac;"></i><i style="left:1.8px;top:22.0px;width:5px;height:0.6px;background:#ecc8ac;"></i><i style="left:1.8px;top:24.3px;width:5px;height:0.6px;background:#ecc8ac;"></i><i style="left:8.5px;top:2.4px;width:0.5px;height:25px;background:#e4e4e4;"></i><i style="left:10px;top:3.6px;width:9px;height:0.6px;background:#dedede;"></i><i style="left:10px;top:5.9px;width:9px;height:0.6px;background:#dedede;"></i><i style="left:10px;top:8.2px;width:9px;height:0.6px;background:#dedede;"></i><i style="left:10px;top:10.5px;width:9px;height:0.6px;background:#dedede;"></i><i style="left:10px;top:12.799999999999999px;width:9px;height:0.6px;background:#dedede;"></i><i style="left:10px;top:15.1px;width:9px;height:0.6px;background:#dedede;"></i><i style="left:10px;top:17.4px;width:9px;height:0.6px;background:#dedede;"></i><i style="left:10px;top:19.7px;width:9px;height:0.6px;background:#dedede;"></i><i style="left:10px;top:22.0px;width:9px;height:0.6px;background:#dedede;"></i><i style="left:10px;top:24.3px;width:9px;height:0.6px;background:#dedede;"></i><i style="left:21px;top:3.6px;width:7px;height:0.6px;background:#e6e6e6;"></i><i style="left:21px;top:5.9px;width:7px;height:0.6px;background:#e6e6e6;"></i><i style="left:21px;top:8.2px;width:7px;height:0.6px;background:#e6e6e6;"></i><i style="left:21px;top:10.5px;width:7px;height:0.6px;background:#e6e6e6;"></i><i style="left:21px;top:12.799999999999999px;width:7px;height:0.6px;background:#e6e6e6;"></i><i style="left:21px;top:15.1px;width:7px;height:0.6px;background:#e6e6e6;"></i><i style="left:21px;top:17.4px;width:7px;height:0.6px;background:#e6e6e6;"></i><i style="left:21px;top:19.7px;width:7px;height:0.6px;background:#e6e6e6;"></i><i style="left:21px;top:22.0px;width:7px;height:0.6px;background:#e6e6e6;"></i><i style="left:21px;top:24.3px;width:7px;height:0.6px;background:#e6e6e6;"></i><i style="left:30px;top:3.6px;width:9px;height:0.6px;background:#e2e2e2;"></i><i style="left:30px;top:5.9px;width:9px;height:0.6px;background:#e2e2e2;"></i><i style="left:30px;top:8.2px;width:9px;height:0.6px;background:#e2e2e2;"></i><i style="left:30px;top:10.5px;width:9px;height:0.6px;background:#e2e2e2;"></i><i style="left:30px;top:12.799999999999999px;width:9px;height:0.6px;background:#e2e2e2;"></i><i style="left:30px;top:15.1px;width:9px;height:0.6px;background:#e2e2e2;"></i><i style="left:30px;top:17.4px;width:9px;height:0.6px;background:#e2e2e2;"></i><i style="left:30px;top:19.7px;width:9px;height:0.6px;background:#e2e2e2;"></i><i style="left:30px;top:22.0px;width:9px;height:0.6px;background:#e2e2e2;"></i><i style="left:30px;top:24.3px;width:9px;height:0.6px;background:#e2e2e2;"></i><i style="left:42px;top:3.6px;width:5px;height:0.6px;background:#e6e6e6;"></i><i style="left:42px;top:5.9px;width:5px;height:0.6px;background:#e6e6e6;"></i><i style="left:42px;top:8.2px;width:5px;height:0.6px;background:#e6e6e6;"></i><i style="left:42px;top:10.5px;width:5px;height:0.6px;background:#e6e6e6;"></i><i style="left:42px;top:12.799999999999999px;width:5px;height:0.6px;background:#e6e6e6;"></i><i style="left:42px;top:15.1px;width:5px;height:0.6px;background:#e6e6e6;"></i><i style="left:42px;top:17.4px;width:5px;height:0.6px;background:#e6e6e6;"></i><i style="left:42px;top:19.7px;width:5px;height:0.6px;background:#e6e6e6;"></i><i style="left:42px;top:22.0px;width:5px;height:0.6px;background:#e6e6e6;"></i><i style="left:42px;top:24.3px;width:5px;height:0.6px;background:#e6e6e6;"></i><i style="left:49px;top:3.6px;width:5px;height:0.6px;background:#e6e6e6;"></i><i style="left:49px;top:5.9px;width:5px;height:0.6px;background:#e6e6e6;"></i><i style="left:49px;top:8.2px;width:5px;height:0.6px;background:#e6e6e6;"></i><i style="left:49px;top:10.5px;width:5px;height:0.6px;background:#e6e6e6;"></i><i style="left:49px;top:12.799999999999999px;width:5px;height:0.6px;background:#e6e6e6;"></i><i style="left:49px;top:15.1px;width:5px;height:0.6px;background:#e6e6e6;"></i><i style="left:49px;top:17.4px;width:5px;height:0.6px;background:#e6e6e6;"></i><i style="left:49px;top:19.7px;width:5px;height:0.6px;background:#e6e6e6;"></i><i style="left:49px;top:22.0px;width:5px;height:0.6px;background:#e6e6e6;"></i><i style="left:49px;top:24.3px;width:5px;height:0.6px;background:#e6e6e6;"></i><i style="left:20px;top:2.4px;width:0.5px;height:25px;background:#ececec;"></i><i style="left:29px;top:2.4px;width:0.5px;height:25px;background:#ececec;"></i><i style="left:41px;top:2.4px;width:0.5px;height:25px;background:#ececec;"></i><i style="left:48px;top:2.4px;width:0.5px;height:25px;background:#ececec;"></i><i style="left:54.6px;top:25.6px;width:2px;height:2px;background:#999;"></i></div>
<div class="th" style="left:140.3px;top:127px;width:57.7px;height:29.2px;background:#fff;"><i style="left:12px;top:3.0px;width:16px;height:0.7px;background:#999;"></i><i style="left:12px;top:4.7px;width:16px;height:0.7px;background:#999;"></i><i style="left:12px;top:6.4px;width:16px;height:0.7px;background:#999;"></i><i style="left:38px;top:3px;width:3px;height:3px;background:#222;"></i><i style="left:42px;top:3.5px;width:8px;height:0.8px;background:#999;"></i><i style="left:38px;top:7px;width:3px;height:2.5px;background:#333;"></i><i style="left:11px;top:11px;width:4px;height:3px;background:#222;"></i><i style="left:16px;top:11.5px;width:8px;height:0.8px;background:#888;"></i><i style="left:24px;top:11px;width:4px;height:3px;background:#222;"></i><i style="left:29px;top:11.5px;width:8px;height:0.8px;background:#888;"></i><i style="left:11px;top:15px;width:4px;height:3px;background:#333;"></i><i style="left:16px;top:15.5px;width:8px;height:0.8px;background:#888;"></i><i style="left:24px;top:15px;width:4px;height:3px;background:#333;"></i><i style="left:29px;top:15.5px;width:8px;height:0.8px;background:#888;"></i><i style="left:11px;top:19px;width:4px;height:2.5px;background:#222;"></i><i style="left:24px;top:19px;width:4px;height:2.5px;background:#222;"></i><i style="left:0px;top:23.5px;width:57.7px;height:5.7px;background:#161616;"></i><i style="left:20px;top:25.5px;width:5px;height:1.4px;background:#ddd;"></i><i style="left:27px;top:25px;width:2px;height:2px;background:#eee;"></i></div>
<div class="th" style="left:204.3px;top:125px;width:57.7px;height:32.6px;background:#fcfcfd;"><i style="left:0px;top:0px;width:57.7px;height:2.2px;background:#f0f0f2;"></i><i style="left:22px;top:1.8px;width:10px;height:1px;background:#99a;"></i><i style="left:0px;top:4px;width:57.7px;height:0.6px;background:#ddd;"></i><i style="left:0px;top:4.6px;width:21px;height:28px;background:#f7f8fa;"></i><i style="left:0.5px;top:12.5px;width:21px;height:1.6px;background:#b9d0ea;"></i><i style="left:21px;top:4.6px;width:0.5px;height:28px;background:#dcdcdc;"></i><i style="left:1px;top:6.0px;width:14px;height:0.7px;background:#e4e4e8;"></i><i style="left:1px;top:7.8px;width:14px;height:0.7px;background:#e4e4e8;"></i><i style="left:1px;top:9.6px;width:14px;height:0.7px;background:#e4e4e8;"></i><i style="left:0px;top:31px;width:57.7px;height:1.6px;background:#eee;"></i></div>
<div class="th" style="left:268.2px;top:123.2px;width:58.1px;height:37.0px;background:#8a8378;"><i style="left:0px;top:0px;width:58.1px;height:37px;background:#777;background:linear-gradient(100deg,#8a8680,#7a7670 60%,#6a625c)"></i><i style="left:0px;top:0px;width:58.1px;height:2.2px;background:#a2a09c;"></i><i style="left:0px;top:6px;width:3.2px;height:28px;background:#4a443e;background:linear-gradient(#8a8680,#3e3a36 40%,#5a544e)"></i><i style="left:3.2px;top:2.2px;width:52.5px;height:31.2px;background:#f7f7f9;"></i><i style="left:3.2px;top:2.2px;width:52.5px;height:2px;background:#ececee;"></i><i style="left:27px;top:2.8px;width:8px;height:0.8px;background:#aab;"></i><i style="left:3.4px;top:14.2px;width:19.5px;height:1.5px;background:#bdd2ea;"></i><i style="left:23.6px;top:4.2px;width:0.5px;height:29px;background:#e0e0e4;"></i><i style="left:4px;top:6px;width:10px;height:0.6px;background:#e6e6ea;"></i><i style="left:4px;top:8px;width:10px;height:0.6px;background:#e6e6ea;"></i><i style="left:4px;top:10px;width:10px;height:0.6px;background:#e6e6ea;"></i><i style="left:24px;top:19.5px;width:30px;height:0.5px;background:#e8e8ec;"></i><i style="left:0px;top:33.4px;width:58.1px;height:3.6px;background:#3a3530;"></i><i style="left:11px;top:34.4px;width:9px;height:1.5px;background:#e8e8e8;"></i><i style="left:21px;top:34.4px;width:6px;height:1.5px;background:#c8c8c8;"></i><i style="left:28px;top:34.6px;width:3px;height:1.2px;background:#222;"></i></div>
<div class="th" style="left:332px;top:124.4px;width:57.6px;height:33.9px;background:#fff;"><i style="left:13.5px;top:5.9px;width:15px;height:0.9px;background:#c4c4c8;"></i><i style="left:41px;top:5.9px;width:2px;height:0.9px;background:#c4c4c8;"></i><svg style="left:0;top:0" width="57.6" height="33.9" viewBox="0 0 57.6 33.9"><circle cx="16.8" cy="12.8" r="2.7" fill="#cdb87c" stroke="#4f96c4" stroke-width="0.8"/><circle cx="16.8" cy="12.8" r="1.2" fill="#b8a468"/><circle cx="41.9" cy="12.8" r="1.4" fill="#e0e0e0" stroke="#b0b0b0" stroke-width="0.4"/><circle cx="16.8" cy="19.4" r="2.7" fill="#e6bf4a" stroke="#4f96c4" stroke-width="0.8"/><circle cx="16.8" cy="19.4" r="1.2" fill="#d8ae38"/><circle cx="41.9" cy="19.4" r="1.4" fill="#e0e0e0" stroke="#b0b0b0" stroke-width="0.4"/><circle cx="16.8" cy="25.7" r="2.7" fill="#ecc040" stroke="#4f96c4" stroke-width="0.8"/><circle cx="16.8" cy="25.7" r="1.2" fill="#e0b030"/><circle cx="41.9" cy="25.7" r="1.4" fill="#e0e0e0" stroke="#b0b0b0" stroke-width="0.4"/></svg><i style="left:21.2px;top:12.3px;width:7.6px;height:1px;background:#9a9a9e;"></i><i style="left:21.2px;top:18.9px;width:6.6px;height:1px;background:#9a9a9e;"></i><i style="left:21.2px;top:25.2px;width:4px;height:1px;background:#9a9a9e;"></i></div>
<div class="th" style="left:397px;top:126px;width:56.3px;height:30.8px;background:#fff;"><i style="left:0.7px;top:2.2px;width:26.5px;height:26.7px;background:#0a0808;"></i><i style="left:2.6px;top:9.2px;width:6.6px;height:6.2px;background:#46466a;"></i><i style="left:4px;top:10.5px;width:3.5px;height:3.5px;background:#6a6a9a;"></i><i style="left:9.2px;top:9.2px;width:16.8px;height:6px;background:#e8e8ea;"></i><i style="left:7.8px;top:16.8px;width:13.4px;height:6.6px;background:#3a2c24;"></i><i style="left:9px;top:18px;width:11px;height:1.2px;background:#ddd;"></i><i style="left:9px;top:20.5px;width:11px;height:1.2px;background:#ccc;"></i><i style="left:2px;top:2.6px;width:10px;height:0.8px;background:#555;"></i><i style="left:3px;top:25.5px;width:22px;height:1.6px;background:#241a14;"></i><i style="left:27.2px;top:2.2px;width:18.6px;height:26.7px;background:#fbfbfb;"></i><i style="left:30px;top:3.6px;width:5px;height:0.7px;background:#ccc;"></i><i style="left:30px;top:5.4px;width:5px;height:0.7px;background:#ccc;"></i><i style="left:37px;top:3.6px;width:6px;height:0.7px;background:#ccc;"></i><i style="left:37px;top:5.4px;width:6px;height:0.7px;background:#ccc;"></i><i style="left:33px;top:8px;width:1.4px;height:0.8px;background:#c8c8c8;"></i><i style="left:33px;top:10px;width:1.4px;height:0.8px;background:#c8c8c8;"></i><i style="left:33px;top:12px;width:1.4px;height:0.8px;background:#c8c8c8;"></i><i style="left:33px;top:14px;width:1.4px;height:0.8px;background:#c8c8c8;"></i><i style="left:33px;top:16px;width:1.4px;height:0.8px;background:#c8c8c8;"></i><i style="left:33px;top:18px;width:1.4px;height:0.8px;background:#c8c8c8;"></i><i style="left:33px;top:20px;width:1.4px;height:0.8px;background:#c8c8c8;"></i><i style="left:33px;top:22px;width:1.4px;height:0.8px;background:#c8c8c8;"></i><i style="left:33px;top:24px;width:1.4px;height:0.8px;background:#c8c8c8;"></i><i style="left:33px;top:26px;width:1.4px;height:0.8px;background:#c8c8c8;"></i><i style="left:40px;top:8px;width:1.4px;height:0.8px;background:#d4d4d4;"></i><i style="left:40px;top:10px;width:1.4px;height:0.8px;background:#d4d4d4;"></i><i style="left:40px;top:12px;width:1.4px;height:0.8px;background:#d4d4d4;"></i><i style="left:40px;top:14px;width:1.4px;height:0.8px;background:#d4d4d4;"></i><i style="left:40px;top:16px;width:1.4px;height:0.8px;background:#d4d4d4;"></i><i style="left:40px;top:18px;width:1.4px;height:0.8px;background:#d4d4d4;"></i><i style="left:40px;top:20px;width:1.4px;height:0.8px;background:#d4d4d4;"></i><i style="left:40px;top:22px;width:1.4px;height:0.8px;background:#d4d4d4;"></i><i style="left:40px;top:24px;width:1.4px;height:0.8px;background:#d4d4d4;"></i><i style="left:40px;top:26px;width:1.4px;height:0.8px;background:#d4d4d4;"></i><i style="left:45.8px;top:2.2px;width:8.1px;height:26.7px;background:#7c7c7c;"></i><i style="left:53.9px;top:2.2px;width:1.5px;height:26.7px;background:#f0f0f0;"></i></div>
<div class="th" style="left:460px;top:125px;width:57.8px;height:33px;background:#2a2524;"><i style="left:0px;top:0px;width:57.8px;height:33px;background:#2a2426;"></i><i style="left:0px;top:0px;width:57.8px;height:3.2px;background:#2c2624;"></i><i style="left:30px;top:1px;width:20px;height:0.9px;background:#5a5250;"></i><i style="left:0.7px;top:3.2px;width:26.5px;height:12.6px;background:#1e1a1a;"></i><i style="left:0.7px;top:3.2px;width:9px;height:9px;background:#dcae88;"></i><i style="left:0.7px;top:10px;width:4px;height:5.8px;background:#c89870;"></i><i style="left:6px;top:4.5px;width:17px;height:12px;background:#18181a;transform:rotate(-24deg)"></i><i style="left:9.8px;top:7.4px;width:8.2px;height:7.4px;background:#a8d4b8;transform:rotate(-24deg)"></i><i style="left:11.6px;top:9.2px;width:4.6px;height:3.8px;background:#3a6a4c;transform:rotate(-24deg)"></i><i style="left:28.3px;top:3.2px;width:28.9px;height:3.8px;background:#221c1c;"></i><i style="left:30px;top:4.5px;width:14px;height:0.9px;background:#6a5a58;"></i><i style="left:28.3px;top:7px;width:28.9px;height:13.8px;background:#d4d8dc;"></i><i style="left:29px;top:7.5px;width:8px;height:10px;background:#4c804c;border-radius:3px"></i><i style="left:30.5px;top:9px;width:4px;height:5px;background:#6aa060;border-radius:2px"></i><i style="left:39.5px;top:9px;width:13.2px;height:10.3px;background:#26262a;transform:rotate(-5deg)"></i><i style="left:41.2px;top:10.4px;width:9.8px;height:7.3px;background:#f2f2f2;transform:rotate(-5deg)"></i><i style="left:44px;top:12.5px;width:4px;height:2px;background:#b83a3a;transform:rotate(-5deg)"></i><i style="left:0.7px;top:16.4px;width:26.5px;height:15.8px;background:#2a2224;"></i><i style="left:3px;top:17.2px;width:18px;height:1.4px;background:#6e2a2a;"></i><i style="left:2px;top:20.5px;width:11px;height:5.5px;background:#3a3234;"></i><i style="left:14.5px;top:20.5px;width:11px;height:5.5px;background:#352e30;"></i><i style="left:3px;top:21.5px;width:8px;height:0.6px;background:#777;"></i><i style="left:3px;top:23.1px;width:8px;height:0.6px;background:#777;"></i><i style="left:2.9px;top:27.4px;width:9.5px;height:3.4px;background:#cfcfd2;"></i><i style="left:14px;top:28px;width:10px;height:2.4px;background:#4a4244;"></i><i style="left:28.3px;top:21.5px;width:28.9px;height:2.4px;background:#7a5c9c;"></i><i style="left:30px;top:22.2px;width:12px;height:0.9px;background:#cbb8e0;"></i><i style="left:28.3px;top:23.9px;width:28.9px;height:8.3px;background:#8a8680;"></i><i style="left:28.6px;top:24.3px;width:3.8px;height:3.6px;background:#c06a7a;"></i><i style="left:32.7px;top:24.3px;width:3.8px;height:3.6px;background:#e8a040;"></i><i style="left:36.8px;top:24.3px;width:3.8px;height:3.6px;background:#5aa0b0;"></i><i style="left:40.9px;top:24.3px;width:3.8px;height:3.6px;background:#d8c8e0;"></i><i style="left:45.0px;top:24.3px;width:3.8px;height:3.6px;background:#b85a3a;"></i><i style="left:49.1px;top:24.3px;width:3.8px;height:3.6px;background:#6a8ac0;"></i><i style="left:53.2px;top:24.3px;width:3.8px;height:3.6px;background:#e0d0a0;"></i><i style="left:28.6px;top:28.3px;width:3.8px;height:3.6px;background:#e0d0a0;"></i><i style="left:32.7px;top:28.3px;width:3.8px;height:3.6px;background:#6a8ac0;"></i><i style="left:36.8px;top:28.3px;width:3.8px;height:3.6px;background:#b85a3a;"></i><i style="left:40.9px;top:28.3px;width:3.8px;height:3.6px;background:#d8c8e0;"></i><i style="left:45.0px;top:28.3px;width:3.8px;height:3.6px;background:#5aa0b0;"></i><i style="left:49.1px;top:28.3px;width:3.8px;height:3.6px;background:#e8a040;"></i><i style="left:53.2px;top:28.3px;width:3.8px;height:3.6px;background:#c06a7a;"></i></div>
<div class="th" style="left:523.2px;top:125px;width:57.8px;height:33px;background:#2a2524;"><i style="left:0px;top:0px;width:57.8px;height:33px;background:#2a2426;"></i><i style="left:0px;top:0px;width:57.8px;height:3.2px;background:#2c2624;"></i><i style="left:30px;top:1px;width:20px;height:0.9px;background:#5a5250;"></i><i style="left:0.7px;top:3.2px;width:26.5px;height:12.6px;background:#1e1a1a;"></i><i style="left:0.7px;top:3.2px;width:9px;height:9px;background:#dcae88;"></i><i style="left:0.7px;top:10px;width:4px;height:5.8px;background:#c89870;"></i><i style="left:6px;top:4.5px;width:17px;height:12px;background:#18181a;transform:rotate(-24deg)"></i><i style="left:9.8px;top:7.4px;width:8.2px;height:7.4px;background:#a8d4b8;transform:rotate(-24deg)"></i><i style="left:11.6px;top:9.2px;width:4.6px;height:3.8px;background:#3a6a4c;transform:rotate(-24deg)"></i><i style="left:28.3px;top:3.2px;width:28.9px;height:3.8px;background:#221c1c;"></i><i style="left:30px;top:4.5px;width:14px;height:0.9px;background:#6a5a58;"></i><i style="left:28.3px;top:7px;width:28.9px;height:13.8px;background:#d4d8dc;"></i><i style="left:29px;top:7.5px;width:8px;height:10px;background:#4c804c;border-radius:3px"></i><i style="left:30.5px;top:9px;width:4px;height:5px;background:#6aa060;border-radius:2px"></i><i style="left:39.5px;top:9px;width:13.2px;height:10.3px;background:#26262a;transform:rotate(-5deg)"></i><i style="left:41.2px;top:10.4px;width:9.8px;height:7.3px;background:#f2f2f2;transform:rotate(-5deg)"></i><i style="left:44px;top:12.5px;width:4px;height:2px;background:#b83a3a;transform:rotate(-5deg)"></i><i style="left:0.7px;top:16.4px;width:26.5px;height:15.8px;background:#2a2224;"></i><i style="left:3px;top:17.2px;width:18px;height:1.4px;background:#6e2a2a;"></i><i style="left:2px;top:20.5px;width:11px;height:5.5px;background:#3a3234;"></i><i style="left:14.5px;top:20.5px;width:11px;height:5.5px;background:#352e30;"></i><i style="left:3px;top:21.5px;width:8px;height:0.6px;background:#777;"></i><i style="left:3px;top:23.1px;width:8px;height:0.6px;background:#777;"></i><i style="left:2.9px;top:27.4px;width:9.5px;height:3.4px;background:#cfcfd2;"></i><i style="left:14px;top:28px;width:10px;height:2.4px;background:#4a4244;"></i><i style="left:28.3px;top:21.5px;width:28.9px;height:2.4px;background:#7a5c9c;"></i><i style="left:30px;top:22.2px;width:12px;height:0.9px;background:#cbb8e0;"></i><i style="left:28.3px;top:23.9px;width:28.9px;height:8.3px;background:#8a8680;"></i><i style="left:28.6px;top:24.3px;width:3.8px;height:3.6px;background:#c06a7a;"></i><i style="left:32.7px;top:24.3px;width:3.8px;height:3.6px;background:#e8a040;"></i><i style="left:36.8px;top:24.3px;width:3.8px;height:3.6px;background:#5aa0b0;"></i><i style="left:40.9px;top:24.3px;width:3.8px;height:3.6px;background:#d8c8e0;"></i><i style="left:45.0px;top:24.3px;width:3.8px;height:3.6px;background:#b85a3a;"></i><i style="left:49.1px;top:24.3px;width:3.8px;height:3.6px;background:#6a8ac0;"></i><i style="left:53.2px;top:24.3px;width:3.8px;height:3.6px;background:#e0d0a0;"></i><i style="left:28.6px;top:28.3px;width:3.8px;height:3.6px;background:#e0d0a0;"></i><i style="left:32.7px;top:28.3px;width:3.8px;height:3.6px;background:#6a8ac0;"></i><i style="left:36.8px;top:28.3px;width:3.8px;height:3.6px;background:#b85a3a;"></i><i style="left:40.9px;top:28.3px;width:3.8px;height:3.6px;background:#d8c8e0;"></i><i style="left:45.0px;top:28.3px;width:3.8px;height:3.6px;background:#5aa0b0;"></i><i style="left:49.1px;top:28.3px;width:3.8px;height:3.6px;background:#e8a040;"></i><i style="left:53.2px;top:28.3px;width:3.8px;height:3.6px;background:#c06a7a;"></i></div>
<div class="th" style="left:587.6px;top:120.2px;width:57.8px;height:42.4px;background:#f6f6f7;"><i style="left:0px;top:0px;width:57.8px;height:19px;background:#f8f8f9;"></i><i style="left:4px;top:4px;width:9px;height:9px;background:#cfcfd2;border-radius:5px"></i><i style="left:6.8px;top:6px;width:3.4px;height:3.4px;background:#f4f4f4;border-radius:2px"></i><i style="left:5.5px;top:9.8px;width:6px;height:2.6px;background:#f4f4f4;border-radius:3px 3px 0 0"></i><b style="left:16.5px;top:3.5px;font-size:3.9px;line-height:5px;color:#333;white-space:nowrap">Hi, Shutterstock!</b><span style="left:16.5px;top:9px;font-size:3px;line-height:4px;color:#aaa;white-space:nowrap">User ID: 312354053</span><i style="left:0px;top:19px;width:57.8px;height:17px;background:#ebebed;"></i><i style="left:4px;top:22.5px;width:9.5px;height:9.5px;background:#e2573a;border-radius:5px;border:0.8px solid #f5c0b0"></i><i style="left:6.8px;top:25px;width:3px;height:4.5px;background:#fbe6de;border-radius:2px;transform:rotate(25deg)"></i><b style="left:16.5px;top:25px;font-size:3.3px;line-height:4.5px;color:#444;white-space:nowrap">General Tools</b><svg style="left:40px;top:29px" width="5" height="7" viewBox="0 0 5 7"><path d="M1.5 0.5 L1.5 4 L0.5 3.5 L2 6.5 L4.3 6.5 L4.5 3 L3 2.3 L3 0.5 Z" fill="#fff" stroke="#333" stroke-width="0.5"/></svg><i style="left:0px;top:36px;width:57.8px;height:6.4px;background:#fafafa;"></i></div>
<div class="th" style="left:651.2px;top:123.6px;width:57.8px;height:36.4px;background:#fff;"><i style="left:1.5px;top:2px;width:3px;height:3px;background:#3a4a6a;border-radius:1px"></i><i style="left:6px;top:2.5px;width:12px;height:0.9px;background:#999;"></i><i style="left:19px;top:2.5px;width:6px;height:0.9px;background:#ccc;"></i><i style="left:8px;top:8.5px;width:2.4px;height:2.4px;background:#555;border-radius:2px"></i><i style="left:12px;top:9px;width:30px;height:1.4px;background:#8a8aa0;background:repeating-linear-gradient(90deg,#778 0 1px,#dde 1px 1.8px)"></i><i style="left:44px;top:9.5px;width:7px;height:0.8px;background:#bbb;"></i><i style="left:6px;top:15.5px;width:3px;height:1px;background:#c8b040;"></i><i style="left:1.5px;top:19px;width:3px;height:3px;background:#3a4a6a;border-radius:1px"></i><i style="left:6px;top:19.5px;width:8px;height:0.9px;background:#999;"></i><i style="left:6px;top:22px;width:4px;height:1px;background:#c8b040;"></i><i style="left:6px;top:25.5px;width:3px;height:0.9px;background:#999;"></i><i style="left:10px;top:30px;width:26px;height:0.8px;background:#ddd;"></i></div>
<div class="th" style="left:715.8px;top:127.4px;width:57.2px;height:28.2px;background:#fff;"><i style="left:0px;top:0px;width:57.2px;height:28.2px;background:#fefefe;border:0.5px solid #eedede"></i><i style="left:0px;top:0px;width:57.2px;height:1.1px;background:#f4e8e8;"></i><i style="left:50.7px;top:0.2px;width:6px;height:1.2px;background:#c87878;"></i><i style="left:1px;top:2.5px;width:6.5px;height:24.2px;background:#f5f3f3;"></i><i style="left:2px;top:4.0px;width:4px;height:0.6px;background:#e6dada;"></i><i style="left:2px;top:6.4px;width:4px;height:0.6px;background:#e6dada;"></i><i style="left:2px;top:8.8px;width:4px;height:0.6px;background:#e6dada;"></i><i style="left:2px;top:11.2px;width:4px;height:0.6px;background:#e6dada;"></i><i style="left:2px;top:13.6px;width:4px;height:0.6px;background:#e6dada;"></i><i style="left:2px;top:16.0px;width:4px;height:0.6px;background:#e6dada;"></i><i style="left:2px;top:18.4px;width:4px;height:0.6px;background:#e6dada;"></i><i style="left:2px;top:20.8px;width:4px;height:0.6px;background:#e6dada;"></i><i style="left:9.5px;top:3.5px;width:12px;height:0.6px;background:#e4e4e4;"></i><i style="left:9.5px;top:5.3px;width:12px;height:0.6px;background:#e4e4e4;"></i><i style="left:9.5px;top:7.1px;width:12px;height:0.6px;background:#e4e4e4;"></i><i style="left:9.5px;top:11.280000000000001px;width:45.2px;height:0.8px;background:#d2d2d2;"></i><i style="left:9.5px;top:12.48px;width:45.2px;height:0.6px;background:#ececec;"></i><i style="left:9.5px;top:15.792000000000002px;width:45.2px;height:0.8px;background:#d8d8d8;"></i><i style="left:9.5px;top:18.048px;width:17.16px;height:0.6px;background:#e4e4e4;"></i><i style="left:9.5px;top:20.868px;width:14.3px;height:0.6px;background:#e8e8e8;"></i><i style="left:9.5px;top:23.688px;width:17.16px;height:0.6px;background:#e8e8e8;"></i><i style="left:25.740000000000002px;top:17.483999999999998px;width:29.744000000000003px;height:9.588000000000001px;background:#f4f4f4;background:repeating-linear-gradient(90deg,#dedede 0 1px,#f8f8f8 1px 3.6px)"></i><i style="left:46.903999999999996px;top:6.204px;width:8px;height:0.7px;background:#d8d8d8;"></i></div>
<div class="th" style="left:13px;top:182.4px;width:57.4px;height:34.4px;background:#fff;"><svg style="left:1.8px;top:4.4px" width="52.4" height="27.1" viewBox="1.8 4.4 52.4 27.1"><defs><linearGradient id="lg1" x1="0" x2="1"><stop offset="0" stop-color="#060606"/><stop offset="0.45" stop-color="#161617"/><stop offset="0.7" stop-color="#2e2e2f"/><stop offset="1" stop-color="#262627"/></linearGradient></defs><rect x="1.8" y="4.4" width="52.4" height="27.1" fill="url(#lg1)"/><ellipse cx="45" cy="14.5" rx="5.5" ry="3" fill="#141415"/><ellipse cx="44.5" cy="23.5" rx="5" ry="3" fill="#121213"/><polygon points="14.6,28.6 33.4,21.2 41,27 23.4,31.5 16,31.5" fill="#2a2c3a"/><polygon points="8.8,13.2 29.3,6.6 33.4,21.2 14.6,28.6" fill="#c4ccf0"/><polygon points="10.2,13.8 28.5,7.9 32,20.6 15.4,27" fill="#d4daf6"/><ellipse cx="21" cy="18" rx="4.6" ry="5.6" fill="#8a98e4" transform="rotate(-20 21 18)"/><ellipse cx="21.6" cy="17" rx="2.2" ry="3" fill="#b8c2f2" transform="rotate(-20 21 18)"/></svg></div>
<div class="th" style="left:76.7px;top:174.6px;width:57.3px;height:49.4px;background:#1d1d1f;"><i style="left:0px;top:0px;width:57.3px;height:3px;background:#232325;"></i><i style="left:3px;top:7px;width:2.5px;height:2.5px;background:#ddd;border-radius:2px"></i><i style="left:12px;top:10.5px;width:6px;height:0.7px;background:#666;"></i><i style="left:20px;top:10.5px;width:4px;height:0.8px;background:#ccc;"></i><i style="left:26px;top:10.5px;width:5px;height:0.7px;background:#666;"></i><i style="left:33px;top:10.5px;width:5px;height:0.7px;background:#666;"></i><i style="left:40px;top:10.5px;width:5px;height:0.7px;background:#666;"></i><i style="left:4px;top:14px;width:23px;height:27px;background:#1b1b1d;border:0.6px solid #333"></i><i style="left:29px;top:14px;width:24px;height:27px;background:#1b1b1d;border:0.6px solid #333"></i><i style="left:5px;top:42px;width:14px;height:0.8px;background:#777;"></i><i style="left:30px;top:42px;width:3px;height:0.8px;background:#666;"></i><i style="left:42px;top:46px;width:5px;height:1.2px;background:#555;"></i><i style="left:49px;top:46px;width:5px;height:1.2px;background:#555;"></i></div>
<div class="th" style="left:140.3px;top:178.3px;width:57.8px;height:42.7px;background:#c9a088;"><i style="left:0px;top:0px;width:57.8px;height:42.7px;background:#d6a888;background:linear-gradient(90deg,#d9a484,#ecccb4 8%,#c8c0bc 12%)"></i><i style="left:0px;top:0px;width:57.8px;height:2px;background:#8a8078;"></i><i style="left:52px;top:0px;width:5.8px;height:42.7px;background:#d0a080;background:linear-gradient(#d8a888,#b88868 45%,#3a2c2a 70%)"></i><i style="left:5.3px;top:2px;width:46.7px;height:37.8px;background:#dadada;"></i><i style="left:5.3px;top:2px;width:46.7px;height:4px;background:#c8c8c8;"></i><i style="left:7px;top:6.5px;width:43px;height:4.5px;background:#e6e6e6;"></i><i style="left:20px;top:7.8px;width:3.7px;height:2.2px;background:#4a6ab0;"></i><i style="left:27px;top:8.2px;width:3px;height:1.2px;background:#bbb;"></i><i style="left:33px;top:8.2px;width:3px;height:1.2px;background:#bbb;"></i><i style="left:8px;top:12px;width:20px;height:20px;background:#fdfdfd;"></i><i style="left:29.4px;top:12px;width:20px;height:20px;background:#fdfdfd;"></i><i style="left:8px;top:33.5px;width:41px;height:0.8px;background:#c4c4c4;"></i><i style="left:0px;top:39.8px;width:57.8px;height:2.9px;background:#3a3030;"></i><i style="left:0px;top:36px;width:5.3px;height:6.7px;background:#6a5048;"></i></div>
<div class="th" style="left:204.3px;top:170.8px;width:57.5px;height:57.2px;background:#14151c;"><i style="left:0px;top:0px;width:57.5px;height:57.2px;background:#16171f;"></i><i style="left:2.2px;top:0.3999999999999999px;width:6.4px;height:6.4px;background:#e4e4e6;border-radius:3.3px"></i><i style="left:3.6px;top:2.2px;width:3.4px;height:3px;background:#2a2a30;border-radius:2px 2px 1px 1px"></i><i style="left:11.8px;top:1.3px;width:13px;height:1px;background:#d0d0d6;height:1.2px"></i><i style="left:26px;top:1.3px;width:11px;height:0.9px;background:#5a5d6a;"></i><i style="left:11.8px;top:3.9000000000000004px;width:38px;height:1.3px;background:#9a9ca8;"></i><i style="left:11.8px;top:6.7px;width:12px;height:1.3px;background:#9a9ca8;"></i><i style="left:2.2px;top:16.7px;width:6.4px;height:6.4px;background:#e4e4e6;border-radius:3.3px"></i><i style="left:3.6px;top:18.5px;width:3.4px;height:3px;background:#2a2a30;border-radius:2px 2px 1px 1px"></i><i style="left:11.8px;top:15.8px;width:13px;height:1px;background:#d0d0d6;height:1.2px"></i><i style="left:26px;top:15.8px;width:11px;height:0.9px;background:#5a5d6a;"></i><i style="left:11.8px;top:18.4px;width:38px;height:1.3px;background:#9a9ca8;"></i><i style="left:11.8px;top:21.7px;width:38px;height:1.3px;background:#9a9ca8;"></i><i style="left:11.8px;top:24.5px;width:12px;height:1.3px;background:#9a9ca8;"></i><i style="left:2.2px;top:33.699999999999996px;width:6.4px;height:6.4px;background:#e4e4e6;border-radius:3.3px"></i><i style="left:3.6px;top:35.5px;width:3.4px;height:3px;background:#2a2a30;border-radius:2px 2px 1px 1px"></i><i style="left:11.8px;top:33.3px;width:13px;height:1px;background:#d0d0d6;height:1.2px"></i><i style="left:26px;top:33.3px;width:11px;height:0.9px;background:#5a5d6a;"></i><i style="left:11.8px;top:36.5px;width:38px;height:1.3px;background:#9a9ca8;"></i><i style="left:11.8px;top:39.5px;width:12px;height:1.3px;background:#9a9ca8;"></i><i style="left:2.2px;top:49.4px;width:6.4px;height:6.4px;background:#e4e4e6;border-radius:3.3px"></i><i style="left:3.6px;top:51.2px;width:3.4px;height:3px;background:#2a2a30;border-radius:2px 2px 1px 1px"></i><i style="left:11.8px;top:48.6px;width:13px;height:1px;background:#d0d0d6;height:1.2px"></i><i style="left:26px;top:48.6px;width:11px;height:0.9px;background:#5a5d6a;"></i><i style="left:11.8px;top:51.8px;width:14px;height:1.3px;background:#9a9ca8;"></i><i style="left:12px;top:11px;width:2px;height:0.8px;background:#3a3d4a;"></i><i style="left:22px;top:11px;width:2px;height:0.8px;background:#3a3d4a;"></i><i style="left:32px;top:11px;width:2px;height:0.8px;background:#3a3d4a;"></i><i style="left:42px;top:11px;width:2px;height:0.8px;background:#3a3d4a;"></i><i style="left:12px;top:29px;width:2px;height:0.8px;background:#3a3d4a;"></i><i style="left:22px;top:29px;width:2px;height:0.8px;background:#3a3d4a;"></i><i style="left:32px;top:29px;width:2px;height:0.8px;background:#3a3d4a;"></i><i style="left:42px;top:29px;width:2px;height:0.8px;background:#3a3d4a;"></i><i style="left:12px;top:44px;width:2px;height:0.8px;background:#3a3d4a;"></i><i style="left:22px;top:44px;width:2px;height:0.8px;background:#3a3d4a;"></i><i style="left:32px;top:44px;width:2px;height:0.8px;background:#3a3d4a;"></i><i style="left:42px;top:44px;width:2px;height:0.8px;background:#3a3d4a;"></i></div>
<div class="th" style="left:268.4px;top:185.4px;width:57.5px;height:28.6px;background:#fff;"><i style="left:0px;top:0px;width:57.5px;height:28.6px;background:#fefefe;border:0.5px solid #eedede"></i><i style="left:0px;top:0px;width:57.5px;height:1.1px;background:#f4e8e8;"></i><i style="left:51.0px;top:0.2px;width:6px;height:1.2px;background:#c87878;"></i><i style="left:1px;top:2.5px;width:6.5px;height:24.6px;background:#f5f3f3;"></i><i style="left:2px;top:4.0px;width:4px;height:0.6px;background:#e6dada;"></i><i style="left:2px;top:6.4px;width:4px;height:0.6px;background:#e6dada;"></i><i style="left:2px;top:8.8px;width:4px;height:0.6px;background:#e6dada;"></i><i style="left:2px;top:11.2px;width:4px;height:0.6px;background:#e6dada;"></i><i style="left:2px;top:13.6px;width:4px;height:0.6px;background:#e6dada;"></i><i style="left:2px;top:16.0px;width:4px;height:0.6px;background:#e6dada;"></i><i style="left:2px;top:18.4px;width:4px;height:0.6px;background:#e6dada;"></i><i style="left:2px;top:20.8px;width:4px;height:0.6px;background:#e6dada;"></i><i style="left:9.5px;top:3.5px;width:12px;height:0.6px;background:#e4e4e4;"></i><i style="left:9.5px;top:5.3px;width:12px;height:0.6px;background:#e4e4e4;"></i><i style="left:9.5px;top:7.1px;width:12px;height:0.6px;background:#e4e4e4;"></i><i style="left:9.5px;top:11.440000000000001px;width:45.5px;height:0.8px;background:#d2d2d2;"></i><i style="left:9.5px;top:12.64px;width:45.5px;height:0.6px;background:#ececec;"></i><i style="left:9.5px;top:16.016000000000002px;width:45.5px;height:0.8px;background:#d8d8d8;"></i><i style="left:9.5px;top:18.304000000000002px;width:17.25px;height:0.6px;background:#e4e4e4;"></i><i style="left:9.5px;top:21.164px;width:14.375px;height:0.6px;background:#e8e8e8;"></i><i style="left:9.5px;top:24.024px;width:17.25px;height:0.6px;background:#e8e8e8;"></i><i style="left:25.875px;top:17.732px;width:29.900000000000002px;height:9.724000000000002px;background:#f4f4f4;background:repeating-linear-gradient(90deg,#dedede 0 1px,#f8f8f8 1px 3.6px)"></i><i style="left:47.15px;top:6.292000000000001px;width:8px;height:0.7px;background:#d8d8d8;"></i></div>
<div class="th" style="left:332px;top:183.2px;width:57.7px;height:32.8px;background:#c68e4a;"><i style="left:0px;top:0px;width:57.7px;height:32.8px;background:#c8945a;background:linear-gradient(#c08a4c,#d4a468 35%,#cc9a5c 60%,#c4873f 75%,#b87a36)"></i><i style="left:34.62px;top:0px;width:23.080000000000002px;height:18.04px;background:#d8a870;background:linear-gradient(90deg,rgba(224,180,124,0),rgba(224,180,124,.8))"></i><i style="left:7.899999999999999px;top:10.5px;width:43px;height:10px;background:#1f3f26;transform:rotate(15deg);border-radius:1.5px"></i><i style="left:7.899999999999999px;top:9.5px;width:43px;height:9.2px;background:#2e5c37;transform:rotate(15deg);border-radius:1.5px"></i><i style="left:14.399999999999999px;top:9.7px;width:5.5px;height:2.6px;background:#e8f0e4;transform:rotate(15deg);border-radius:1px"></i><i style="left:22.4px;top:12.5px;width:11px;height:2px;background:#a8c4a8;transform:rotate(15deg)"></i><i style="left:41.9px;top:16.2px;width:5px;height:5px;background:#3f7a48;border-radius:3px"></i><i style="left:43.2px;top:17.5px;width:2.4px;height:2.4px;background:#dfe8dc;border-radius:2px"></i></div>
<div class="th" style="left:396px;top:185.8px;width:57.3px;height:27.6px;background:#c68e4a;"><i style="left:0px;top:0px;width:57.3px;height:27.6px;background:#c8945a;background:linear-gradient(#c08a4c,#d4a468 35%,#cc9a5c 60%,#c4873f 75%,#b87a36)"></i><i style="left:34.379999999999995px;top:0px;width:22.92px;height:15.180000000000001px;background:#d8a870;background:linear-gradient(90deg,rgba(224,180,124,0),rgba(224,180,124,.8))"></i><i style="left:7.899999999999999px;top:8.600000000000001px;width:43px;height:10px;background:#1f3f26;transform:rotate(15deg);border-radius:1.5px"></i><i style="left:7.899999999999999px;top:7.6000000000000005px;width:43px;height:9.2px;background:#2e5c37;transform:rotate(15deg);border-radius:1.5px"></i><i style="left:14.399999999999999px;top:7.800000000000001px;width:5.5px;height:2.6px;background:#e8f0e4;transform:rotate(15deg);border-radius:1px"></i><i style="left:22.4px;top:10.600000000000001px;width:11px;height:2px;background:#a8c4a8;transform:rotate(15deg)"></i><i style="left:41.9px;top:14.3px;width:5px;height:5px;background:#3f7a48;border-radius:3px"></i><i style="left:43.2px;top:15.600000000000001px;width:2.4px;height:2.4px;background:#dfe8dc;border-radius:2px"></i></div>
<div class="th" style="left:460px;top:186.6px;width:57.7px;height:25.7px;background:#fff;"><i style="left:2.4px;top:2.2px;width:4px;height:0.8px;background:#8a8a8a;"></i><i style="left:2.4px;top:3.9px;width:10px;height:0.75px;background:#b2b2b2;"></i><i style="left:2.4px;top:5.55px;width:11.5px;height:0.75px;background:#b2b2b2;"></i><i style="left:2.4px;top:7.199999999999999px;width:9px;height:0.75px;background:#b2b2b2;"></i><i style="left:2.4px;top:8.85px;width:12px;height:0.75px;background:#b2b2b2;"></i><i style="left:2.4px;top:10.5px;width:10.5px;height:0.75px;background:#b2b2b2;"></i><i style="left:2.4px;top:12.15px;width:11px;height:0.75px;background:#b2b2b2;"></i><i style="left:2.4px;top:13.799999999999999px;width:12.5px;height:0.75px;background:#b2b2b2;"></i><i style="left:2.4px;top:15.45px;width:9.5px;height:0.75px;background:#b2b2b2;"></i><i style="left:2.4px;top:17.099999999999998px;width:11px;height:0.75px;background:#b2b2b2;"></i><i style="left:2.4px;top:18.75px;width:10px;height:0.75px;background:#b2b2b2;"></i><i style="left:2.4px;top:20.4px;width:10px;height:0.75px;background:#b2b2b2;"></i><i style="left:2.4px;top:22.049999999999997px;width:11.5px;height:0.75px;background:#b2b2b2;"></i><i style="left:24px;top:3.9px;width:1.4px;height:0.75px;background:#bcbcbc;"></i><i style="left:24px;top:5.55px;width:1.4px;height:0.75px;background:#bcbcbc;"></i><i style="left:24px;top:7.199999999999999px;width:1.4px;height:0.75px;background:#bcbcbc;"></i><i style="left:24px;top:8.85px;width:1.4px;height:0.75px;background:#bcbcbc;"></i><i style="left:24px;top:10.5px;width:1.4px;height:0.75px;background:#bcbcbc;"></i><i style="left:24px;top:12.15px;width:1.4px;height:0.75px;background:#bcbcbc;"></i><i style="left:24px;top:13.799999999999999px;width:1.4px;height:0.75px;background:#bcbcbc;"></i><i style="left:24px;top:15.45px;width:1.4px;height:0.75px;background:#bcbcbc;"></i><i style="left:24px;top:17.099999999999998px;width:1.4px;height:0.75px;background:#bcbcbc;"></i><i style="left:24px;top:18.75px;width:1.4px;height:0.75px;background:#bcbcbc;"></i><i style="left:24px;top:20.4px;width:1.4px;height:0.75px;background:#bcbcbc;"></i><i style="left:24px;top:22.049999999999997px;width:1.4px;height:0.75px;background:#bcbcbc;"></i><i style="left:29.3px;top:3.9px;width:2.2px;height:0.75px;background:#bcbcbc;"></i><i style="left:29.3px;top:5.55px;width:2.2px;height:0.75px;background:#bcbcbc;"></i><i style="left:29.3px;top:7.199999999999999px;width:2.2px;height:0.75px;background:#bcbcbc;"></i><i style="left:29.3px;top:8.85px;width:2.2px;height:0.75px;background:#bcbcbc;"></i><i style="left:29.3px;top:10.5px;width:2.2px;height:0.75px;background:#bcbcbc;"></i><i style="left:29.3px;top:12.15px;width:2.2px;height:0.75px;background:#bcbcbc;"></i><i style="left:29.3px;top:13.799999999999999px;width:2.2px;height:0.75px;background:#bcbcbc;"></i><i style="left:29.3px;top:15.45px;width:2.2px;height:0.75px;background:#bcbcbc;"></i><i style="left:29.3px;top:17.099999999999998px;width:2.2px;height:0.75px;background:#bcbcbc;"></i><i style="left:29.3px;top:18.75px;width:2.2px;height:0.75px;background:#bcbcbc;"></i><i style="left:29.3px;top:20.4px;width:2.2px;height:0.75px;background:#bcbcbc;"></i><i style="left:29.3px;top:22.049999999999997px;width:2.2px;height:0.75px;background:#bcbcbc;"></i><i style="left:42.6px;top:1.6px;width:3.4px;height:0.8px;background:#8a8a8a;"></i><i style="left:48.7px;top:1.6px;width:3.8px;height:0.8px;background:#8a8a8a;"></i><i style="left:42.8px;top:3.3px;width:2.8px;height:0.75px;background:#b8b8b8;"></i><i style="left:42.8px;top:4.949999999999999px;width:2.8px;height:0.75px;background:#b8b8b8;"></i><i style="left:42.8px;top:6.6px;width:2.8px;height:0.75px;background:#b8b8b8;"></i><i style="left:42.8px;top:8.25px;width:2.8px;height:0.75px;background:#b8b8b8;"></i><i style="left:42.8px;top:9.899999999999999px;width:2.8px;height:0.75px;background:#b8b8b8;"></i><i style="left:42.8px;top:11.55px;width:2.8px;height:0.75px;background:#b8b8b8;"></i><i style="left:42.8px;top:13.2px;width:2.8px;height:0.75px;background:#b8b8b8;"></i><i style="left:42.8px;top:14.849999999999998px;width:2.8px;height:0.75px;background:#b8b8b8;"></i><i style="left:42.8px;top:16.5px;width:2.8px;height:0.75px;background:#b8b8b8;"></i><i style="left:42.8px;top:18.15px;width:2.8px;height:0.75px;background:#b8b8b8;"></i><i style="left:42.8px;top:19.8px;width:2.8px;height:0.75px;background:#b8b8b8;"></i><i style="left:42.8px;top:21.45px;width:2.8px;height:0.75px;background:#b8b8b8;"></i><i style="left:49px;top:3.3px;width:3px;height:0.75px;background:#b8b8b8;"></i><i style="left:49px;top:4.949999999999999px;width:3px;height:0.75px;background:#b8b8b8;"></i><i style="left:49px;top:6.6px;width:3px;height:0.75px;background:#b8b8b8;"></i><i style="left:49px;top:8.25px;width:3px;height:0.75px;background:#b8b8b8;"></i><i style="left:49px;top:9.899999999999999px;width:3px;height:0.75px;background:#b8b8b8;"></i><i style="left:49px;top:11.55px;width:3px;height:0.75px;background:#b8b8b8;"></i><i style="left:49px;top:13.2px;width:3px;height:0.75px;background:#b8b8b8;"></i><i style="left:49px;top:14.849999999999998px;width:3px;height:0.75px;background:#b8b8b8;"></i><i style="left:49px;top:16.5px;width:3px;height:0.75px;background:#b8b8b8;"></i><i style="left:49px;top:18.15px;width:3px;height:0.75px;background:#b8b8b8;"></i><i style="left:49px;top:19.8px;width:3px;height:0.75px;background:#b8b8b8;"></i><i style="left:49px;top:21.45px;width:3px;height:0.75px;background:#b8b8b8;"></i></div>
<div class="th" style="left:523.2px;top:185.4px;width:58.4px;height:28.6px;background:#fff;"><i style="left:0px;top:0px;width:58.4px;height:28.6px;background:#fefefe;border:0.5px solid #eedede"></i><i style="left:0px;top:0px;width:58.4px;height:1.1px;background:#f4e8e8;"></i><i style="left:51.9px;top:0.2px;width:6px;height:1.2px;background:#c87878;"></i><i style="left:1px;top:2.5px;width:6.5px;height:24.6px;background:#f5f3f3;"></i><i style="left:2px;top:4.0px;width:4px;height:0.6px;background:#e6dada;"></i><i style="left:2px;top:6.4px;width:4px;height:0.6px;background:#e6dada;"></i><i style="left:2px;top:8.8px;width:4px;height:0.6px;background:#e6dada;"></i><i style="left:2px;top:11.2px;width:4px;height:0.6px;background:#e6dada;"></i><i style="left:2px;top:13.6px;width:4px;height:0.6px;background:#e6dada;"></i><i style="left:2px;top:16.0px;width:4px;height:0.6px;background:#e6dada;"></i><i style="left:2px;top:18.4px;width:4px;height:0.6px;background:#e6dada;"></i><i style="left:2px;top:20.8px;width:4px;height:0.6px;background:#e6dada;"></i><i style="left:9.5px;top:3.5px;width:12px;height:0.6px;background:#e4e4e4;"></i><i style="left:9.5px;top:5.3px;width:12px;height:0.6px;background:#e4e4e4;"></i><i style="left:9.5px;top:7.1px;width:12px;height:0.6px;background:#e4e4e4;"></i><i style="left:9.5px;top:11.440000000000001px;width:46.4px;height:0.8px;background:#d2d2d2;"></i><i style="left:9.5px;top:12.64px;width:46.4px;height:0.6px;background:#ececec;"></i><i style="left:9.5px;top:16.016000000000002px;width:46.4px;height:0.8px;background:#d8d8d8;"></i><i style="left:9.5px;top:18.304000000000002px;width:17.52px;height:0.6px;background:#e4e4e4;"></i><i style="left:9.5px;top:21.164px;width:14.6px;height:0.6px;background:#e8e8e8;"></i><i style="left:9.5px;top:24.024px;width:17.52px;height:0.6px;background:#e8e8e8;"></i><i style="left:26.28px;top:17.732px;width:30.368px;height:9.724000000000002px;background:#f4f4f4;background:repeating-linear-gradient(90deg,#dedede 0 1px,#f8f8f8 1px 3.6px)"></i><i style="left:47.888px;top:6.292000000000001px;width:8px;height:0.7px;background:#d8d8d8;"></i></div>
<div class="th" style="left:587.6px;top:192.7px;width:57.8px;height:15.1px;background:#fff;"><i style="left:2.4px;top:2.2px;width:4px;height:0.8px;background:#8a8a8a;"></i><i style="left:2.4px;top:3.9px;width:10px;height:0.75px;background:#b2b2b2;"></i><i style="left:2.4px;top:5.55px;width:11.5px;height:0.75px;background:#b2b2b2;"></i><i style="left:2.4px;top:7.199999999999999px;width:9px;height:0.75px;background:#b2b2b2;"></i><i style="left:2.4px;top:8.85px;width:12px;height:0.75px;background:#b2b2b2;"></i><i style="left:2.4px;top:10.5px;width:10.5px;height:0.75px;background:#b2b2b2;"></i><i style="left:2.4px;top:12.15px;width:11px;height:0.75px;background:#b2b2b2;"></i><i style="left:24px;top:3.9px;width:1.4px;height:0.75px;background:#bcbcbc;"></i><i style="left:24px;top:5.55px;width:1.4px;height:0.75px;background:#bcbcbc;"></i><i style="left:24px;top:7.199999999999999px;width:1.4px;height:0.75px;background:#bcbcbc;"></i><i style="left:24px;top:8.85px;width:1.4px;height:0.75px;background:#bcbcbc;"></i><i style="left:24px;top:10.5px;width:1.4px;height:0.75px;background:#bcbcbc;"></i><i style="left:24px;top:12.15px;width:1.4px;height:0.75px;background:#bcbcbc;"></i><i style="left:29.3px;top:3.9px;width:2.2px;height:0.75px;background:#bcbcbc;"></i><i style="left:29.3px;top:5.55px;width:2.2px;height:0.75px;background:#bcbcbc;"></i><i style="left:29.3px;top:7.199999999999999px;width:2.2px;height:0.75px;background:#bcbcbc;"></i><i style="left:29.3px;top:8.85px;width:2.2px;height:0.75px;background:#bcbcbc;"></i><i style="left:29.3px;top:10.5px;width:2.2px;height:0.75px;background:#bcbcbc;"></i><i style="left:29.3px;top:12.15px;width:2.2px;height:0.75px;background:#bcbcbc;"></i><i style="left:42.6px;top:1.6px;width:3.4px;height:0.8px;background:#8a8a8a;"></i><i style="left:48.7px;top:1.6px;width:3.8px;height:0.8px;background:#8a8a8a;"></i><i style="left:42.8px;top:3.3px;width:2.8px;height:0.75px;background:#b8b8b8;"></i><i style="left:42.8px;top:4.949999999999999px;width:2.8px;height:0.75px;background:#b8b8b8;"></i><i style="left:42.8px;top:6.6px;width:2.8px;height:0.75px;background:#b8b8b8;"></i><i style="left:42.8px;top:8.25px;width:2.8px;height:0.75px;background:#b8b8b8;"></i><i style="left:42.8px;top:9.899999999999999px;width:2.8px;height:0.75px;background:#b8b8b8;"></i><i style="left:42.8px;top:11.55px;width:2.8px;height:0.75px;background:#b8b8b8;"></i><i style="left:49px;top:3.3px;width:3px;height:0.75px;background:#b8b8b8;"></i><i style="left:49px;top:4.949999999999999px;width:3px;height:0.75px;background:#b8b8b8;"></i><i style="left:49px;top:6.6px;width:3px;height:0.75px;background:#b8b8b8;"></i><i style="left:49px;top:8.25px;width:3px;height:0.75px;background:#b8b8b8;"></i><i style="left:49px;top:9.899999999999999px;width:3px;height:0.75px;background:#b8b8b8;"></i><i style="left:49px;top:11.55px;width:3px;height:0.75px;background:#b8b8b8;"></i></div>
<div class="th" style="left:651.2px;top:192.2px;width:57.8px;height:15.6px;background:#fff;"><i style="left:2.4px;top:2.2px;width:4px;height:0.8px;background:#8a8a8a;"></i><i style="left:2.4px;top:3.9px;width:10px;height:0.75px;background:#b2b2b2;"></i><i style="left:2.4px;top:5.55px;width:11.5px;height:0.75px;background:#b2b2b2;"></i><i style="left:2.4px;top:7.199999999999999px;width:9px;height:0.75px;background:#b2b2b2;"></i><i style="left:2.4px;top:8.85px;width:12px;height:0.75px;background:#b2b2b2;"></i><i style="left:2.4px;top:10.5px;width:10.5px;height:0.75px;background:#b2b2b2;"></i><i style="left:2.4px;top:12.15px;width:11px;height:0.75px;background:#b2b2b2;"></i><i style="left:24px;top:3.9px;width:1.4px;height:0.75px;background:#bcbcbc;"></i><i style="left:24px;top:5.55px;width:1.4px;height:0.75px;background:#bcbcbc;"></i><i style="left:24px;top:7.199999999999999px;width:1.4px;height:0.75px;background:#bcbcbc;"></i><i style="left:24px;top:8.85px;width:1.4px;height:0.75px;background:#bcbcbc;"></i><i style="left:24px;top:10.5px;width:1.4px;height:0.75px;background:#bcbcbc;"></i><i style="left:24px;top:12.15px;width:1.4px;height:0.75px;background:#bcbcbc;"></i><i style="left:29.3px;top:3.9px;width:2.2px;height:0.75px;background:#bcbcbc;"></i><i style="left:29.3px;top:5.55px;width:2.2px;height:0.75px;background:#bcbcbc;"></i><i style="left:29.3px;top:7.199999999999999px;width:2.2px;height:0.75px;background:#bcbcbc;"></i><i style="left:29.3px;top:8.85px;width:2.2px;height:0.75px;background:#bcbcbc;"></i><i style="left:29.3px;top:10.5px;width:2.2px;height:0.75px;background:#bcbcbc;"></i><i style="left:29.3px;top:12.15px;width:2.2px;height:0.75px;background:#bcbcbc;"></i><i style="left:42.6px;top:1.6px;width:3.4px;height:0.8px;background:#8a8a8a;"></i><i style="left:48.7px;top:1.6px;width:3.8px;height:0.8px;background:#8a8a8a;"></i><i style="left:42.8px;top:3.3px;width:2.8px;height:0.75px;background:#b8b8b8;"></i><i style="left:42.8px;top:4.949999999999999px;width:2.8px;height:0.75px;background:#b8b8b8;"></i><i style="left:42.8px;top:6.6px;width:2.8px;height:0.75px;background:#b8b8b8;"></i><i style="left:42.8px;top:8.25px;width:2.8px;height:0.75px;background:#b8b8b8;"></i><i style="left:42.8px;top:9.899999999999999px;width:2.8px;height:0.75px;background:#b8b8b8;"></i><i style="left:42.8px;top:11.55px;width:2.8px;height:0.75px;background:#b8b8b8;"></i><i style="left:49px;top:3.3px;width:3px;height:0.75px;background:#b8b8b8;"></i><i style="left:49px;top:4.949999999999999px;width:3px;height:0.75px;background:#b8b8b8;"></i><i style="left:49px;top:6.6px;width:3px;height:0.75px;background:#b8b8b8;"></i><i style="left:49px;top:8.25px;width:3px;height:0.75px;background:#b8b8b8;"></i><i style="left:49px;top:9.899999999999999px;width:3px;height:0.75px;background:#b8b8b8;"></i><i style="left:49px;top:11.55px;width:3px;height:0.75px;background:#b8b8b8;"></i></div>
<div class="th" style="left:715.3px;top:185.4px;width:57.7px;height:28.6px;background:#fff;"><i style="left:19px;top:4.5px;width:1.5px;height:1.5px;background:#999;"></i><i style="left:22px;top:8.0px;width:14px;height:0.6px;background:#bbb;"></i><i style="left:22px;top:9.5px;width:14px;height:0.6px;background:#bbb;"></i><i style="left:22px;top:11.0px;width:14px;height:0.6px;background:#bbb;"></i><i style="left:19.5px;top:13px;width:11px;height:12.5px;background:#c9c9c9;background:repeating-linear-gradient(90deg,#bdbdbd 0 1px,#dedede 1px 1.8px)"></i></div>
<div class="th" style="left:12.6px;top:236.7px;width:57.8px;height:46.7px;background:#1b1e26;"><b style="left:4.5px;top:3.2px;font-size:3.3px;line-height:5px;color:#f0f0f0;white-space:nowrap">Who to follow</b><i style="left:4px;top:10.6px;width:6.4px;height:6.4px;background:#e4e4e6;border-radius:4px"></i><i style="left:5.7px;top:12.1px;width:3px;height:3px;background:#555;border-radius:2px"></i><i style="left:12px;top:11.2px;width:15px;height:1.4px;background:#e8e8e8;"></i><i style="left:12px;top:14.3px;width:11px;height:0.9px;background:#667;"></i><i style="left:40.5px;top:11.4px;width:12px;height:4.6px;background:#f2f2f2;border-radius:2.5px"></i><i style="left:43.5px;top:13.2px;width:6px;height:1px;background:#555;"></i><i style="left:4px;top:20.6px;width:6.4px;height:6.4px;background:#e4e4e6;border-radius:4px"></i><i style="left:5.7px;top:22.1px;width:3px;height:3px;background:#555;border-radius:2px"></i><i style="left:12px;top:21.2px;width:22px;height:1.4px;background:#e8e8e8;"></i><i style="left:12px;top:24.3px;width:11px;height:0.9px;background:#667;"></i><i style="left:40.5px;top:21.4px;width:12px;height:4.6px;background:#f2f2f2;border-radius:2.5px"></i><i style="left:43.5px;top:23.2px;width:6px;height:1px;background:#555;"></i><i style="left:4px;top:30.6px;width:6.4px;height:6.4px;background:#e4e4e6;border-radius:4px"></i><i style="left:5.7px;top:32.1px;width:3px;height:3px;background:#fff;border-radius:2px"></i><i style="left:12px;top:31.2px;width:9px;height:1.4px;background:#e8e8e8;"></i><i style="left:12px;top:34.3px;width:11px;height:0.9px;background:#667;"></i><i style="left:40.5px;top:31.4px;width:12px;height:4.6px;background:#f2f2f2;border-radius:2.5px"></i><i style="left:43.5px;top:33.2px;width:6px;height:1px;background:#555;"></i><i style="left:4.5px;top:42.5px;width:9px;height:0.9px;background:#4a4e5a;"></i></div>
<div class="th" style="left:76.7px;top:245.7px;width:57.5px;height:28.9px;background:#fff;"><i style="left:19px;top:4.5px;width:1.5px;height:1.5px;background:#999;"></i><i style="left:22px;top:7.5px;width:12px;height:0.6px;background:#ccc;"></i><i style="left:22px;top:9.0px;width:12px;height:0.6px;background:#ccc;"></i><i style="left:19.5px;top:11.5px;width:11px;height:15px;background:#ddd;background:repeating-linear-gradient(90deg,#cfcfcf 0 1px,#eee 1px 1.8px)"></i></div>
<div class="th" style="left:140.3px;top:245.7px;width:57.7px;height:28.9px;background:#fff;"><i style="left:0px;top:0px;width:57.7px;height:28.9px;background:#fefefe;border:0.5px solid #eedede"></i><i style="left:0px;top:0px;width:57.7px;height:1.1px;background:#f4e8e8;"></i><i style="left:51.2px;top:0.2px;width:6px;height:1.2px;background:#c87878;"></i><i style="left:1px;top:2.5px;width:6.5px;height:24.9px;background:#f5f3f3;"></i><i style="left:2px;top:4.0px;width:4px;height:0.6px;background:#e6dada;"></i><i style="left:2px;top:6.4px;width:4px;height:0.6px;background:#e6dada;"></i><i style="left:2px;top:8.8px;width:4px;height:0.6px;background:#e6dada;"></i><i style="left:2px;top:11.2px;width:4px;height:0.6px;background:#e6dada;"></i><i style="left:2px;top:13.6px;width:4px;height:0.6px;background:#e6dada;"></i><i style="left:2px;top:16.0px;width:4px;height:0.6px;background:#e6dada;"></i><i style="left:2px;top:18.4px;width:4px;height:0.6px;background:#e6dada;"></i><i style="left:2px;top:20.8px;width:4px;height:0.6px;background:#e6dada;"></i><i style="left:9.5px;top:3.5px;width:12px;height:0.6px;background:#e4e4e4;"></i><i style="left:9.5px;top:5.3px;width:12px;height:0.6px;background:#e4e4e4;"></i><i style="left:9.5px;top:7.1px;width:12px;height:0.6px;background:#e4e4e4;"></i><i style="left:9.5px;top:11.56px;width:45.7px;height:0.8px;background:#d2d2d2;"></i><i style="left:9.5px;top:12.76px;width:45.7px;height:0.6px;background:#ececec;"></i><i style="left:9.5px;top:16.184px;width:45.7px;height:0.8px;background:#d8d8d8;"></i><i style="left:9.5px;top:18.496px;width:17.31px;height:0.6px;background:#e4e4e4;"></i><i style="left:9.5px;top:21.386px;width:14.425px;height:0.6px;background:#e8e8e8;"></i><i style="left:9.5px;top:24.275999999999996px;width:17.31px;height:0.6px;background:#e8e8e8;"></i><i style="left:25.965000000000003px;top:17.918px;width:30.004px;height:9.826px;background:#f4f4f4;background:repeating-linear-gradient(90deg,#dedede 0 1px,#f8f8f8 1px 3.6px)"></i><i style="left:47.314px;top:6.358px;width:8px;height:0.7px;background:#d8d8d8;"></i></div>
<div class="th" style="left:204.3px;top:245.7px;width:57.7px;height:28.9px;background:#fff;"><i style="left:0px;top:0px;width:57.7px;height:28.9px;background:#fefefe;border:0.5px solid #e4e4e4"></i><i style="left:0px;top:0px;width:57.7px;height:1.1px;background:#efefef;"></i><i style="left:51.2px;top:0.2px;width:6px;height:1.2px;background:#555;"></i><i style="left:1px;top:2.5px;width:6.5px;height:24.9px;background:#f5f3f3;"></i><i style="left:2px;top:4.0px;width:4px;height:0.6px;background:#e0e0e0;"></i><i style="left:2px;top:6.4px;width:4px;height:0.6px;background:#e0e0e0;"></i><i style="left:2px;top:8.8px;width:4px;height:0.6px;background:#e0e0e0;"></i><i style="left:2px;top:11.2px;width:4px;height:0.6px;background:#e0e0e0;"></i><i style="left:2px;top:13.6px;width:4px;height:0.6px;background:#e0e0e0;"></i><i style="left:2px;top:16.0px;width:4px;height:0.6px;background:#e0e0e0;"></i><i style="left:2px;top:18.4px;width:4px;height:0.6px;background:#e0e0e0;"></i><i style="left:2px;top:20.8px;width:4px;height:0.6px;background:#e0e0e0;"></i><i style="left:9.5px;top:3.5px;width:12px;height:0.6px;background:#e4e4e4;"></i><i style="left:9.5px;top:5.3px;width:12px;height:0.6px;background:#e4e4e4;"></i><i style="left:9.5px;top:7.1px;width:12px;height:0.6px;background:#e4e4e4;"></i><i style="left:9.5px;top:11.56px;width:45.7px;height:0.8px;background:#d2d2d2;"></i><i style="left:9.5px;top:12.76px;width:45.7px;height:0.6px;background:#ececec;"></i><i style="left:9.5px;top:16.184px;width:45.7px;height:0.8px;background:#d8d8d8;"></i><i style="left:9.5px;top:18.496px;width:17.31px;height:0.6px;background:#e4e4e4;"></i><i style="left:9.5px;top:21.386px;width:14.425px;height:0.6px;background:#e8e8e8;"></i><i style="left:9.5px;top:24.275999999999996px;width:17.31px;height:0.6px;background:#e8e8e8;"></i><i style="left:25.965000000000003px;top:17.918px;width:30.004px;height:9.826px;background:#f4f4f4;background:repeating-linear-gradient(90deg,#dedede 0 1px,#f8f8f8 1px 3.6px)"></i><i style="left:47.314px;top:6.358px;width:8px;height:0.7px;background:#d8d8d8;"></i></div>
<div class="th" style="left:268.4px;top:248.2px;width:57.6px;height:23.8px;background:#fff;"><i style="left:2.4px;top:2.2px;width:4px;height:0.8px;background:#8a8a8a;"></i><i style="left:2.4px;top:3.9px;width:10px;height:0.75px;background:#b2b2b2;"></i><i style="left:2.4px;top:5.55px;width:11.5px;height:0.75px;background:#b2b2b2;"></i><i style="left:2.4px;top:7.199999999999999px;width:9px;height:0.75px;background:#b2b2b2;"></i><i style="left:2.4px;top:8.85px;width:12px;height:0.75px;background:#b2b2b2;"></i><i style="left:2.4px;top:10.5px;width:10.5px;height:0.75px;background:#b2b2b2;"></i><i style="left:2.4px;top:12.15px;width:11px;height:0.75px;background:#b2b2b2;"></i><i style="left:2.4px;top:13.799999999999999px;width:12.5px;height:0.75px;background:#b2b2b2;"></i><i style="left:2.4px;top:15.45px;width:9.5px;height:0.75px;background:#b2b2b2;"></i><i style="left:2.4px;top:17.099999999999998px;width:11px;height:0.75px;background:#b2b2b2;"></i><i style="left:2.4px;top:18.75px;width:10px;height:0.75px;background:#b2b2b2;"></i><i style="left:24px;top:3.9px;width:1.4px;height:0.75px;background:#bcbcbc;"></i><i style="left:24px;top:5.55px;width:1.4px;height:0.75px;background:#bcbcbc;"></i><i style="left:24px;top:7.199999999999999px;width:1.4px;height:0.75px;background:#bcbcbc;"></i><i style="left:24px;top:8.85px;width:1.4px;height:0.75px;background:#bcbcbc;"></i><i style="left:24px;top:10.5px;width:1.4px;height:0.75px;background:#bcbcbc;"></i><i style="left:24px;top:12.15px;width:1.4px;height:0.75px;background:#bcbcbc;"></i><i style="left:24px;top:13.799999999999999px;width:1.4px;height:0.75px;background:#bcbcbc;"></i><i style="left:24px;top:15.45px;width:1.4px;height:0.75px;background:#bcbcbc;"></i><i style="left:24px;top:17.099999999999998px;width:1.4px;height:0.75px;background:#bcbcbc;"></i><i style="left:24px;top:18.75px;width:1.4px;height:0.75px;background:#bcbcbc;"></i><i style="left:29.3px;top:3.9px;width:2.2px;height:0.75px;background:#bcbcbc;"></i><i style="left:29.3px;top:5.55px;width:2.2px;height:0.75px;background:#bcbcbc;"></i><i style="left:29.3px;top:7.199999999999999px;width:2.2px;height:0.75px;background:#bcbcbc;"></i><i style="left:29.3px;top:8.85px;width:2.2px;height:0.75px;background:#bcbcbc;"></i><i style="left:29.3px;top:10.5px;width:2.2px;height:0.75px;background:#bcbcbc;"></i><i style="left:29.3px;top:12.15px;width:2.2px;height:0.75px;background:#bcbcbc;"></i><i style="left:29.3px;top:13.799999999999999px;width:2.2px;height:0.75px;background:#bcbcbc;"></i><i style="left:29.3px;top:15.45px;width:2.2px;height:0.75px;background:#bcbcbc;"></i><i style="left:29.3px;top:17.099999999999998px;width:2.2px;height:0.75px;background:#bcbcbc;"></i><i style="left:29.3px;top:18.75px;width:2.2px;height:0.75px;background:#bcbcbc;"></i><i style="left:42.6px;top:1.6px;width:3.4px;height:0.8px;background:#8a8a8a;"></i><i style="left:48.7px;top:1.6px;width:3.8px;height:0.8px;background:#8a8a8a;"></i><i style="left:42.8px;top:3.3px;width:2.8px;height:0.75px;background:#b8b8b8;"></i><i style="left:42.8px;top:4.949999999999999px;width:2.8px;height:0.75px;background:#b8b8b8;"></i><i style="left:42.8px;top:6.6px;width:2.8px;height:0.75px;background:#b8b8b8;"></i><i style="left:42.8px;top:8.25px;width:2.8px;height:0.75px;background:#b8b8b8;"></i><i style="left:42.8px;top:9.899999999999999px;width:2.8px;height:0.75px;background:#b8b8b8;"></i><i style="left:42.8px;top:11.55px;width:2.8px;height:0.75px;background:#b8b8b8;"></i><i style="left:42.8px;top:13.2px;width:2.8px;height:0.75px;background:#b8b8b8;"></i><i style="left:42.8px;top:14.849999999999998px;width:2.8px;height:0.75px;background:#b8b8b8;"></i><i style="left:42.8px;top:16.5px;width:2.8px;height:0.75px;background:#b8b8b8;"></i><i style="left:42.8px;top:18.15px;width:2.8px;height:0.75px;background:#b8b8b8;"></i><i style="left:49px;top:3.3px;width:3px;height:0.75px;background:#b8b8b8;"></i><i style="left:49px;top:4.949999999999999px;width:3px;height:0.75px;background:#b8b8b8;"></i><i style="left:49px;top:6.6px;width:3px;height:0.75px;background:#b8b8b8;"></i><i style="left:49px;top:8.25px;width:3px;height:0.75px;background:#b8b8b8;"></i><i style="left:49px;top:9.899999999999999px;width:3px;height:0.75px;background:#b8b8b8;"></i><i style="left:49px;top:11.55px;width:3px;height:0.75px;background:#b8b8b8;"></i><i style="left:49px;top:13.2px;width:3px;height:0.75px;background:#b8b8b8;"></i><i style="left:49px;top:14.849999999999998px;width:3px;height:0.75px;background:#b8b8b8;"></i><i style="left:49px;top:16.5px;width:3px;height:0.75px;background:#b8b8b8;"></i><i style="left:49px;top:18.15px;width:3px;height:0.75px;background:#b8b8b8;"></i><i style="left:2px;top:20.5px;width:20px;height:0.8px;background:#888;"></i><i style="left:27px;top:20.5px;width:3px;height:0.8px;background:#888;"></i><i style="left:48px;top:20.5px;width:3px;height:0.8px;background:#888;"></i></div>
<div class="th" style="left:332px;top:246.2px;width:57.8px;height:28.4px;background:#fff;"><i style="left:0px;top:0px;width:57.8px;height:28.4px;background:#fbfbfd;"></i><i style="left:0px;top:0px;width:57.8px;height:2.6px;background:#2a2e4c;"></i><i style="left:1px;top:0.8px;width:6px;height:0.8px;background:#889;"></i><i style="left:20px;top:0.8px;width:8px;height:0.8px;background:#667;"></i><i style="left:0px;top:2.6px;width:57.8px;height:1.6px;background:#ececf2;"></i><i style="left:0.6px;top:5px;width:4.5px;height:20.9px;background:#f0f0f5;"></i><i style="left:6px;top:5.5px;width:49.8px;height:1.4px;background:#f1f1f5;"></i><i style="left:7px;top:8.5px;width:46.8px;height:0.6px;background:#ebebf0;"></i><i style="left:7px;top:10.8px;width:46.8px;height:0.6px;background:#ebebf0;"></i><i style="left:7px;top:13.1px;width:46.8px;height:0.6px;background:#ebebf0;"></i><i style="left:7px;top:15.399999999999999px;width:46.8px;height:0.6px;background:#ebebf0;"></i><i style="left:7px;top:17.7px;width:46.8px;height:0.6px;background:#ebebf0;"></i><i style="left:7px;top:20.0px;width:46.8px;height:0.6px;background:#ebebf0;"></i><i style="left:7px;top:22.299999999999997px;width:46.8px;height:0.6px;background:#ebebf0;"></i><i style="left:14px;top:7px;width:0.5px;height:18.4px;background:#e6e6ec;"></i><i style="left:24px;top:7px;width:0.5px;height:18.4px;background:#e9e9ee;"></i><i style="left:33px;top:7px;width:0.5px;height:18.4px;background:#e9e9ee;"></i><i style="left:46px;top:7px;width:0.5px;height:18.4px;background:#e9e9ee;"></i><i style="left:0px;top:26.4px;width:57.8px;height:2px;background:#f0f0f4;"></i><i style="left:55.199999999999996px;top:25.799999999999997px;width:2px;height:2px;background:#778;"></i></div>
<div class="th" style="left:395.8px;top:246.2px;width:57.8px;height:28.4px;background:#fff;"><i style="left:0px;top:0px;width:57.8px;height:28.4px;background:#fbfbfd;"></i><i style="left:0px;top:0px;width:57.8px;height:2.6px;background:#2a2e4c;"></i><i style="left:1px;top:0.8px;width:6px;height:0.8px;background:#889;"></i><i style="left:20px;top:0.8px;width:8px;height:0.8px;background:#667;"></i><i style="left:0px;top:2.6px;width:57.8px;height:1.6px;background:#ececf2;"></i><i style="left:0.6px;top:5px;width:4.5px;height:20.9px;background:#f0f0f5;"></i><i style="left:6px;top:5.5px;width:49.8px;height:1.4px;background:#f1f1f5;"></i><i style="left:7px;top:8.5px;width:46.8px;height:0.6px;background:#ebebf0;"></i><i style="left:7px;top:10.8px;width:46.8px;height:0.6px;background:#ebebf0;"></i><i style="left:7px;top:13.1px;width:46.8px;height:0.6px;background:#ebebf0;"></i><i style="left:7px;top:15.399999999999999px;width:46.8px;height:0.6px;background:#ebebf0;"></i><i style="left:7px;top:17.7px;width:46.8px;height:0.6px;background:#ebebf0;"></i><i style="left:7px;top:20.0px;width:46.8px;height:0.6px;background:#ebebf0;"></i><i style="left:7px;top:22.299999999999997px;width:46.8px;height:0.6px;background:#ebebf0;"></i><i style="left:14px;top:7px;width:0.5px;height:18.4px;background:#e6e6ec;"></i><i style="left:24px;top:7px;width:0.5px;height:18.4px;background:#e9e9ee;"></i><i style="left:33px;top:7px;width:0.5px;height:18.4px;background:#e9e9ee;"></i><i style="left:46px;top:7px;width:0.5px;height:18.4px;background:#e9e9ee;"></i><i style="left:0px;top:26.4px;width:57.8px;height:2px;background:#f0f0f4;"></i><i style="left:55.199999999999996px;top:25.799999999999997px;width:2px;height:2px;background:#778;"></i></div>
<div class="th" style="left:460px;top:246.2px;width:57.7px;height:28.4px;background:#fff;"><i style="left:0px;top:0px;width:57.7px;height:28.4px;background:#fbfbfd;"></i><i style="left:0px;top:0px;width:57.7px;height:2.6px;background:#2a2e4c;"></i><i style="left:1px;top:0.8px;width:6px;height:0.8px;background:#889;"></i><i style="left:20px;top:0.8px;width:8px;height:0.8px;background:#667;"></i><i style="left:0px;top:2.6px;width:57.7px;height:1.6px;background:#ececf2;"></i><i style="left:0.6px;top:5px;width:4.5px;height:20.9px;background:#f0f0f5;"></i><i style="left:6px;top:5.5px;width:49.7px;height:1.4px;background:#f1f1f5;"></i><i style="left:7px;top:8.5px;width:46.7px;height:0.6px;background:#ebebf0;"></i><i style="left:7px;top:10.8px;width:46.7px;height:0.6px;background:#ebebf0;"></i><i style="left:7px;top:13.1px;width:46.7px;height:0.6px;background:#ebebf0;"></i><i style="left:7px;top:15.399999999999999px;width:46.7px;height:0.6px;background:#ebebf0;"></i><i style="left:7px;top:17.7px;width:46.7px;height:0.6px;background:#ebebf0;"></i><i style="left:7px;top:20.0px;width:46.7px;height:0.6px;background:#ebebf0;"></i><i style="left:7px;top:22.299999999999997px;width:46.7px;height:0.6px;background:#ebebf0;"></i><i style="left:14px;top:7px;width:0.5px;height:18.4px;background:#e6e6ec;"></i><i style="left:24px;top:7px;width:0.5px;height:18.4px;background:#e9e9ee;"></i><i style="left:33px;top:7px;width:0.5px;height:18.4px;background:#e9e9ee;"></i><i style="left:46px;top:7px;width:0.5px;height:18.4px;background:#e9e9ee;"></i><i style="left:0px;top:26.4px;width:57.7px;height:2px;background:#f0f0f4;"></i><i style="left:55.1px;top:25.799999999999997px;width:2px;height:2px;background:#778;"></i><i style="left:8px;top:11px;width:3px;height:1px;background:#d8b870;"></i></div>
<div class="th" style="left:523.2px;top:245.7px;width:58.4px;height:28.9px;background:#fff;"><i style="left:19px;top:3.5px;width:10px;height:0.8px;background:#bbb;"></i><i style="left:20px;top:7px;width:1.2px;height:1.2px;background:#bbb;"></i><i style="left:22.5px;top:10.5px;width:12px;height:5px;background:#2f66b8;border-radius:1px"></i><i style="left:26px;top:12.6px;width:5px;height:0.8px;background:#cde;"></i><i style="left:20px;top:18px;width:1.2px;height:1.2px;background:#ccc;"></i><i style="left:20px;top:24px;width:3px;height:0.8px;background:#ccc;"></i></div>
<div class="th" style="left:587.6px;top:239.4px;width:57.8px;height:42.0px;background:#fff;"><i style="left:0px;top:0px;width:57.8px;height:42px;background:#fff;border:0.7px solid #bbb"></i><i style="left:1px;top:1.2px;width:55.8px;height:1.5px;background:#eee;"></i><i style="left:1.6px;top:3.6px;width:4px;height:0.6px;background:#aaa;"></i><i style="left:1.6px;top:5.1px;width:4px;height:0.6px;background:#aaa;"></i><i style="left:2.6px;top:6.6px;width:6px;height:0.6px;background:#b4b4b4;"></i><i style="left:2.6px;top:8.1px;width:6px;height:0.6px;background:#b4b4b4;"></i><i style="left:2.6px;top:9.6px;width:6px;height:0.6px;background:#b4b4b4;"></i><i style="left:2.6px;top:11.1px;width:6px;height:0.6px;background:#b4b4b4;"></i><i style="left:2.6px;top:12.6px;width:6px;height:0.6px;background:#b4b4b4;"></i><i style="left:2.6px;top:14.1px;width:6px;height:0.6px;background:#b4b4b4;"></i><i style="left:2.6px;top:15.6px;width:6px;height:0.6px;background:#b4b4b4;"></i><i style="left:11px;top:3px;width:0.6px;height:37px;background:#ddd;"></i><i style="left:12px;top:5px;width:14px;height:1.6px;background:#2b4fa8;"></i><i style="left:1px;top:40px;width:8px;height:0.8px;background:#ccc;"></i></div>
<div class="th" style="left:651.2px;top:239.4px;width:57.8px;height:42.0px;background:#fff;"><i style="left:0px;top:0px;width:57.8px;height:42px;background:#fff;border:0.7px solid #bbb"></i><i style="left:1px;top:1.2px;width:55.8px;height:1.5px;background:#eee;"></i><i style="left:1.6px;top:3.6px;width:4px;height:0.6px;background:#aaa;"></i><i style="left:1.6px;top:5.1px;width:4px;height:0.6px;background:#aaa;"></i><i style="left:2.6px;top:6.6px;width:6px;height:0.6px;background:#b4b4b4;"></i><i style="left:2.6px;top:8.1px;width:6px;height:0.6px;background:#b4b4b4;"></i><i style="left:2.6px;top:9.6px;width:6px;height:0.6px;background:#b4b4b4;"></i><i style="left:2.6px;top:11.1px;width:6px;height:0.6px;background:#b4b4b4;"></i><i style="left:2.6px;top:12.6px;width:6px;height:0.6px;background:#b4b4b4;"></i><i style="left:2.6px;top:14.1px;width:6px;height:0.6px;background:#b4b4b4;"></i><i style="left:2.6px;top:15.6px;width:6px;height:0.6px;background:#b4b4b4;"></i><i style="left:11px;top:3px;width:0.6px;height:37px;background:#ddd;"></i><i style="left:12px;top:4.5px;width:43.8px;height:1.2px;background:#bbb;"></i><i style="left:12px;top:7px;width:43.8px;height:1.2px;background:#ccc;"></i><i style="left:12px;top:11px;width:43.8px;height:1.2px;background:#ccc;"></i><i style="left:13px;top:15px;width:3px;height:3px;background:#3a8a3a;border-radius:2px"></i><i style="left:17px;top:16px;width:18px;height:1.2px;background:#4aa04a;"></i><i style="left:1px;top:40px;width:8px;height:0.8px;background:#ccc;"></i></div>
<div class="th" style="left:715.3px;top:239.4px;width:57.7px;height:42.0px;background:#fff;"><i style="left:0px;top:0px;width:57.7px;height:42px;background:#fff;border:0.7px solid #bbb"></i><i style="left:1px;top:1.2px;width:55.7px;height:1.5px;background:#eee;"></i><i style="left:1.6px;top:3.6px;width:4px;height:0.6px;background:#aaa;"></i><i style="left:1.6px;top:5.1px;width:4px;height:0.6px;background:#aaa;"></i><i style="left:2.6px;top:6.6px;width:6px;height:0.6px;background:#b4b4b4;"></i><i style="left:2.6px;top:8.1px;width:6px;height:0.6px;background:#b4b4b4;"></i><i style="left:2.6px;top:9.6px;width:6px;height:0.6px;background:#b4b4b4;"></i><i style="left:2.6px;top:11.1px;width:6px;height:0.6px;background:#b4b4b4;"></i><i style="left:2.6px;top:12.6px;width:6px;height:0.6px;background:#b4b4b4;"></i><i style="left:2.6px;top:14.1px;width:6px;height:0.6px;background:#b4b4b4;"></i><i style="left:2.6px;top:15.6px;width:6px;height:0.6px;background:#b4b4b4;"></i><i style="left:11px;top:3px;width:0.6px;height:37px;background:#ddd;"></i><i style="left:12px;top:4.5px;width:43.7px;height:1.2px;background:#bbb;"></i><i style="left:12px;top:8px;width:43.7px;height:1.2px;background:#ccc;"></i><i style="left:12px;top:12px;width:43.7px;height:0.8px;background:#ddd;"></i><i style="left:12px;top:14px;width:43.7px;height:0.8px;background:#ddd;"></i><i style="left:12px;top:16px;width:43.7px;height:0.8px;background:#ddd;"></i><i style="left:12px;top:21.0px;width:43.7px;height:1.7px;background:#c4c4c4;"></i><i style="left:12px;top:23.6px;width:43.7px;height:1.7px;background:#c4c4c4;"></i><i style="left:12px;top:26.2px;width:43.7px;height:1.7px;background:#c4c4c4;"></i><i style="left:12px;top:28.8px;width:43.7px;height:1.7px;background:#c4c4c4;"></i><i style="left:12px;top:31.4px;width:43.7px;height:1.7px;background:#c4c4c4;"></i><i style="left:12px;top:34.0px;width:43.7px;height:1.7px;background:#c4c4c4;"></i><i style="left:12px;top:36.6px;width:43.7px;height:1.7px;background:#c4c4c4;"></i><i style="left:1px;top:40px;width:8px;height:0.8px;background:#ccc;"></i></div>
<div class="th" style="left:16.3px;top:291.3px;width:50.3px;height:58.1px;background:#fdfdfd;"><i style="left:0px;top:0px;width:50.3px;height:58.1px;background:#fdfdfd;border:0.5px solid #d4d4d4"></i><i style="left:0px;top:0px;width:50.3px;height:2.6px;background:#eef0f4;"></i><i style="left:1px;top:0.9px;width:12px;height:0.9px;background:#a4a4b4;"></i><i style="left:0px;top:2.6px;width:50.3px;height:1.6px;background:#f4f4f6;"></i><i style="left:11px;top:8.5px;width:24px;height:1.3px;background:#888;"></i><i style="left:1.5px;top:12.5px;width:7px;height:3.2px;background:#5a86d0;border-radius:2px"></i><i style="left:1.5px;top:16.5px;width:7px;height:0.9px;background:#99b;"></i><i style="left:1.5px;top:19.5px;width:7px;height:2.2px;background:#8aa6e0;border-radius:1px"></i><i style="left:14px;top:11.5px;width:13px;height:0.7px;background:#b8b8b8;"></i><i style="left:14px;top:13.5px;width:13px;height:0.7px;background:#b8b8b8;"></i><i style="left:14px;top:15.5px;width:13px;height:0.7px;background:#b8b8b8;"></i><i style="left:14px;top:17.5px;width:13px;height:0.7px;background:#b8b8b8;"></i><i style="left:14px;top:19.5px;width:13px;height:0.7px;background:#b8b8b8;"></i><i style="left:36px;top:11.5px;width:10px;height:0.7px;background:#c4c4c4;"></i><i style="left:36px;top:13.5px;width:10px;height:0.7px;background:#c4c4c4;"></i><i style="left:36px;top:15.5px;width:10px;height:0.7px;background:#c4c4c4;"></i><i style="left:36px;top:17.5px;width:10px;height:0.7px;background:#c4c4c4;"></i><i style="left:36px;top:19.5px;width:10px;height:0.7px;background:#c4c4c4;"></i><i style="left:4px;top:24px;width:44px;height:0.8px;background:#aaa;"></i><i style="left:5px;top:26.5px;width:18px;height:0.7px;background:#aeaeae;"></i><i style="left:5px;top:28.6px;width:18px;height:0.7px;background:#aeaeae;"></i><i style="left:5px;top:30.7px;width:18px;height:0.7px;background:#aeaeae;"></i><i style="left:5px;top:32.8px;width:18px;height:0.7px;background:#aeaeae;"></i><i style="left:5px;top:34.9px;width:18px;height:0.7px;background:#aeaeae;"></i><i style="left:5px;top:37.0px;width:18px;height:0.7px;background:#aeaeae;"></i><i style="left:5px;top:39.1px;width:18px;height:0.7px;background:#aeaeae;"></i><i style="left:5px;top:41.2px;width:18px;height:0.7px;background:#aeaeae;"></i><i style="left:5px;top:43.3px;width:18px;height:0.7px;background:#aeaeae;"></i><i style="left:5px;top:45.400000000000006px;width:18px;height:0.7px;background:#aeaeae;"></i><i style="left:5px;top:47.5px;width:18px;height:0.7px;background:#aeaeae;"></i><i style="left:5px;top:49.6px;width:18px;height:0.7px;background:#aeaeae;"></i><i style="left:5px;top:51.7px;width:18px;height:0.7px;background:#aeaeae;"></i><i style="left:5px;top:53.8px;width:18px;height:0.7px;background:#aeaeae;"></i><i style="left:28px;top:26.5px;width:3px;height:0.7px;background:#c8c8c8;"></i><i style="left:28px;top:28.6px;width:3px;height:0.7px;background:#c8c8c8;"></i><i style="left:28px;top:30.7px;width:3px;height:0.7px;background:#c8c8c8;"></i><i style="left:28px;top:32.8px;width:3px;height:0.7px;background:#c8c8c8;"></i><i style="left:28px;top:34.9px;width:3px;height:0.7px;background:#c8c8c8;"></i><i style="left:28px;top:37.0px;width:3px;height:0.7px;background:#c8c8c8;"></i><i style="left:28px;top:39.1px;width:3px;height:0.7px;background:#c8c8c8;"></i><i style="left:28px;top:41.2px;width:3px;height:0.7px;background:#c8c8c8;"></i><i style="left:28px;top:43.3px;width:3px;height:0.7px;background:#c8c8c8;"></i><i style="left:28px;top:45.400000000000006px;width:3px;height:0.7px;background:#c8c8c8;"></i><i style="left:28px;top:47.5px;width:3px;height:0.7px;background:#c8c8c8;"></i><i style="left:28px;top:49.6px;width:3px;height:0.7px;background:#c8c8c8;"></i><i style="left:28px;top:51.7px;width:3px;height:0.7px;background:#c8c8c8;"></i><i style="left:28px;top:53.8px;width:3px;height:0.7px;background:#c8c8c8;"></i><i style="left:34px;top:26.5px;width:3px;height:0.7px;background:#c8c8c8;"></i><i style="left:34px;top:28.6px;width:3px;height:0.7px;background:#c8c8c8;"></i><i style="left:34px;top:30.7px;width:3px;height:0.7px;background:#c8c8c8;"></i><i style="left:34px;top:32.8px;width:3px;height:0.7px;background:#c8c8c8;"></i><i style="left:34px;top:34.9px;width:3px;height:0.7px;background:#c8c8c8;"></i><i style="left:34px;top:37.0px;width:3px;height:0.7px;background:#c8c8c8;"></i><i style="left:34px;top:39.1px;width:3px;height:0.7px;background:#c8c8c8;"></i><i style="left:34px;top:41.2px;width:3px;height:0.7px;background:#c8c8c8;"></i><i style="left:34px;top:43.3px;width:3px;height:0.7px;background:#c8c8c8;"></i><i style="left:34px;top:45.400000000000006px;width:3px;height:0.7px;background:#c8c8c8;"></i><i style="left:34px;top:47.5px;width:3px;height:0.7px;background:#c8c8c8;"></i><i style="left:34px;top:49.6px;width:3px;height:0.7px;background:#c8c8c8;"></i><i style="left:34px;top:51.7px;width:3px;height:0.7px;background:#c8c8c8;"></i><i style="left:34px;top:53.8px;width:3px;height:0.7px;background:#c8c8c8;"></i><i style="left:40px;top:26.5px;width:7px;height:0.7px;background:#bcbcbc;"></i><i style="left:40px;top:28.6px;width:7px;height:0.7px;background:#bcbcbc;"></i><i style="left:40px;top:30.7px;width:7px;height:0.7px;background:#bcbcbc;"></i><i style="left:40px;top:32.8px;width:7px;height:0.7px;background:#bcbcbc;"></i><i style="left:40px;top:34.9px;width:7px;height:0.7px;background:#bcbcbc;"></i><i style="left:40px;top:37.0px;width:7px;height:0.7px;background:#bcbcbc;"></i><i style="left:40px;top:39.1px;width:7px;height:0.7px;background:#bcbcbc;"></i><i style="left:40px;top:41.2px;width:7px;height:0.7px;background:#bcbcbc;"></i><i style="left:40px;top:43.3px;width:7px;height:0.7px;background:#bcbcbc;"></i><i style="left:40px;top:45.400000000000006px;width:7px;height:0.7px;background:#bcbcbc;"></i><i style="left:40px;top:47.5px;width:7px;height:0.7px;background:#bcbcbc;"></i><i style="left:40px;top:49.6px;width:7px;height:0.7px;background:#bcbcbc;"></i><i style="left:40px;top:51.7px;width:7px;height:0.7px;background:#bcbcbc;"></i><i style="left:40px;top:53.8px;width:7px;height:0.7px;background:#bcbcbc;"></i><i style="left:27px;top:24px;width:0.5px;height:32px;background:#e0e0e0;"></i><i style="left:33px;top:24px;width:0.5px;height:32px;background:#e0e0e0;"></i><i style="left:39px;top:24px;width:0.5px;height:32px;background:#e0e0e0;"></i></div>
<div class="th" style="left:76.7px;top:306px;width:57.8px;height:29.5px;background:#fff;"><i style="left:0px;top:0px;width:57.8px;height:29.5px;background:#fff;border:0.6px solid #bbb"></i><i style="left:1px;top:1px;width:10px;height:1.1px;background:#99a;"></i><i style="left:13px;top:1px;width:3px;height:1.1px;background:#bbb;"></i><i style="left:18px;top:1px;width:3px;height:1.1px;background:#bbb;"></i><i style="left:1px;top:3.4px;width:4.2px;height:23.5px;background:#ececec;"></i><i style="left:1.6px;top:4.6px;width:3px;height:0.8px;background:#777;"></i><i style="left:1.6px;top:6.3999999999999995px;width:3px;height:0.8px;background:#777;"></i><i style="left:1.6px;top:8.2px;width:3px;height:0.8px;background:#777;"></i><i style="left:1.6px;top:10.0px;width:3px;height:0.8px;background:#777;"></i><i style="left:1.6px;top:11.8px;width:3px;height:0.8px;background:#777;"></i><i style="left:1.6px;top:13.6px;width:3px;height:0.8px;background:#777;"></i><i style="left:7.6px;top:6.2px;width:10.6px;height:16.4px;background:#e9e9e9;border:0.5px solid #aaa;background:repeating-linear-gradient(90deg,rgba(120,120,120,.35) 0 0.6px,transparent 0.6px 2.1px),repeating-linear-gradient(rgba(120,120,120,.3) 0 0.6px,transparent 0.6px 2px),#f0f0f0"></i><i style="left:19.0px;top:6.2px;width:10.6px;height:16.4px;background:#e9e9e9;border:0.5px solid #aaa;background:repeating-linear-gradient(90deg,rgba(120,120,120,.35) 0 0.6px,transparent 0.6px 2.1px),repeating-linear-gradient(rgba(120,120,120,.3) 0 0.6px,transparent 0.6px 2px),#f0f0f0"></i><i style="left:30.4px;top:6.2px;width:10.6px;height:16.4px;background:#e9e9e9;border:0.5px solid #aaa;background:repeating-linear-gradient(90deg,rgba(120,120,120,.35) 0 0.6px,transparent 0.6px 2.1px),repeating-linear-gradient(rgba(120,120,120,.3) 0 0.6px,transparent 0.6px 2px),#f0f0f0"></i><i style="left:41.800000000000004px;top:6.2px;width:10.6px;height:16.4px;background:#e9e9e9;border:0.5px solid #aaa;background:repeating-linear-gradient(90deg,rgba(120,120,120,.35) 0 0.6px,transparent 0.6px 2.1px),repeating-linear-gradient(rgba(120,120,120,.3) 0 0.6px,transparent 0.6px 2px),#f0f0f0"></i><i style="left:38.5px;top:6.6px;width:3.2px;height:2.6px;background:#333;"></i><i style="left:52.6px;top:4.4px;width:2px;height:1.6px;background:#999;"></i><i style="left:7.6px;top:4.4px;width:43px;height:0.9px;background:#c4c4c4;"></i><i style="left:2px;top:27.4px;width:20px;height:0.7px;background:#c4c4c4;"></i></div>
<div class="th" style="left:140.3px;top:306.6px;width:57.7px;height:27.7px;background:#1e5a4a;"><i style="left:0px;top:0px;width:57.7px;height:2.8px;background:#fafafa;"></i><i style="left:0px;top:2.8px;width:57.7px;height:24.9px;background:#1f5c4b;background:linear-gradient(90deg,#1a5243,#23644f 50%,#1a5243)"></i><i style="left:18px;top:6px;width:19px;height:1px;background:#9fd0b8;"></i><i style="left:16px;top:11.5px;width:23px;height:2px;background:#8fe0b0;"></i><i style="left:17.5px;top:16px;width:20px;height:9.5px;background:#f2f4f2;border-radius:1px"></i><i style="left:19.5px;top:18.5px;width:6px;height:5px;background:#234;border-radius:1px"></i><i style="left:29px;top:18.5px;width:6px;height:4px;background:#cdd;"></i><i style="left:45px;top:0.5px;width:10px;height:1px;background:#bbb;"></i></div>
<div class="th" style="left:204.3px;top:306.6px;width:57.7px;height:28.2px;background:#fff;"><i style="left:17px;top:7px;width:18px;height:0.8px;background:#bbb;"></i><i style="left:17px;top:10px;width:10px;height:0.8px;background:#ddd;"></i><i style="left:17px;top:13.5px;width:20px;height:1.2px;background:#e8e0e0;"></i><i style="left:17px;top:16.5px;width:8px;height:0.8px;background:#ddd;"></i><i style="left:17px;top:19px;width:21px;height:1.3px;background:#c86464;"></i></div>
<div class="th" style="left:268.4px;top:306.6px;width:57.5px;height:28.7px;background:#020202;"><i style="left:0px;top:0px;width:57.5px;height:1.2px;background:#1a1a1a;"></i><i style="left:1px;top:2.6px;width:22px;height:0.7px;background:#777;"></i><i style="left:1px;top:5.2px;width:28px;height:0.8px;background:#888;"></i><i style="left:1px;top:7.6px;width:16px;height:0.8px;background:#777;"></i><i style="left:1px;top:10.6px;width:20px;height:0.8px;background:#808080;"></i><i style="left:1px;top:13.2px;width:18px;height:0.8px;background:#777;"></i><i style="left:1px;top:16px;width:10px;height:0.8px;background:#666;"></i></div>
<div class="th" style="left:332px;top:306.6px;width:57.8px;height:28.2px;background:#fff;"><i style="left:0px;top:0px;width:57.8px;height:2px;background:#eef;"></i><i style="left:1px;top:2.5px;width:23.5px;height:5.5px;background:#2e63b4;"></i><i style="left:1px;top:8px;width:23.5px;height:6px;background:#f2f4f8;"></i><i style="left:17px;top:8.5px;width:7px;height:4.5px;background:#1c3a78;"></i><i style="left:28px;top:3px;width:24px;height:1px;background:#ccc;"></i><i style="left:28px;top:6px;width:22px;height:0.7px;background:#e2e2e2;"></i><i style="left:28px;top:8px;width:22px;height:0.7px;background:#e2e2e2;"></i><i style="left:28px;top:10px;width:22px;height:0.7px;background:#e2e2e2;"></i><i style="left:28px;top:12px;width:22px;height:0.7px;background:#e2e2e2;"></i><i style="left:2px;top:16.0px;width:14px;height:0.7px;background:#ddd;"></i><i style="left:2px;top:18.4px;width:14px;height:0.7px;background:#ddd;"></i><i style="left:2px;top:20.8px;width:14px;height:0.7px;background:#ddd;"></i><i style="left:1.5px;top:24.5px;width:5px;height:1.5px;background:#345;"></i></div>
<div class="th" style="left:395.8px;top:306.4px;width:57.8px;height:28.9px;background:#e7e7ea;"><i style="left:0px;top:0px;width:57.8px;height:28.9px;background:#e6e6ea;"></i><i style="left:0px;top:0px;width:57.8px;height:1.8px;background:#1c1c24;"></i><i style="left:0px;top:1.8px;width:57.8px;height:1.4px;background:#f4f4f4;"></i><i style="left:13px;top:3.2px;width:34px;height:25.7px;background:#f6f6f8;"></i><i style="left:16px;top:9.0px;width:6px;height:0.8px;background:#d8d8dc;"></i><i style="left:16px;top:12.2px;width:6px;height:0.8px;background:#d8d8dc;"></i><i style="left:16px;top:15.4px;width:6px;height:0.8px;background:#d8d8dc;"></i><i style="left:16px;top:18.6px;width:6px;height:0.8px;background:#d8d8dc;"></i><i style="left:16px;top:21.8px;width:6px;height:0.8px;background:#d8d8dc;"></i><i style="left:16px;top:25.0px;width:6px;height:0.8px;background:#d8d8dc;"></i><i style="left:27px;top:9px;width:4px;height:0.8px;background:#dcdce0;"></i><i style="left:27px;top:15px;width:4px;height:0.8px;background:#dcdce0;"></i><i style="left:27px;top:21px;width:4px;height:0.8px;background:#dcdce0;"></i><i style="left:40px;top:9px;width:4px;height:0.8px;background:#dcdce0;"></i><i style="left:40px;top:15px;width:4px;height:0.8px;background:#dcdce0;"></i><i style="left:40px;top:21px;width:4px;height:0.8px;background:#dcdce0;"></i></div>
<div class="th" style="left:460px;top:306.4px;width:57.7px;height:28.9px;background:#e7e7ea;"><i style="left:0px;top:0px;width:57.7px;height:28.9px;background:#e6e6ea;"></i><i style="left:0px;top:0px;width:57.7px;height:1.8px;background:#1c1c24;"></i><i style="left:0px;top:1.8px;width:57.7px;height:1.4px;background:#f4f4f4;"></i><i style="left:11px;top:4.2px;width:35px;height:22px;background:#fff;"></i><i style="left:22px;top:5.5px;width:3px;height:1px;background:#888;"></i><i style="left:18px;top:8px;width:21px;height:0.9px;background:#99a;"></i><i style="left:14px;top:11px;width:26px;height:0.7px;background:#ccc;"></i><i style="left:14px;top:13.2px;width:19px;height:1.4px;background:#3a62c0;"></i><i style="left:33px;top:13.2px;width:7px;height:1.4px;background:#c03a3a;"></i><i style="left:14px;top:15.6px;width:26px;height:1.2px;background:#9ab0e0;"></i><i style="left:16px;top:18.5px;width:22px;height:0.8px;background:#bcd;"></i><i style="left:14px;top:27px;width:30px;height:1.2px;background:#fff;"></i></div>
<div class="th" style="left:523.7px;top:306.4px;width:57.9px;height:28.9px;background:#c9d2d8;"><i style="left:0px;top:0px;width:57.9px;height:28.9px;background:#cbd3d8;background:linear-gradient(100deg,#c4ced6,#d4d8d6 50%,#cfd2cc)"></i><i style="left:0px;top:0px;width:57.9px;height:6.5px;background:#1d3a52;"></i><i style="left:24px;top:1.5px;width:10px;height:0.9px;background:#9ab;"></i><i style="left:52px;top:2px;width:4px;height:1px;background:#9ab;"></i><i style="left:4px;top:8px;width:1px;height:19px;background:#e8ecee;transform:rotate(25deg)"></i><i style="left:12px;top:7px;width:1px;height:20px;background:#e8ecee;transform:rotate(20deg)"></i><i style="left:19px;top:8px;width:0.8px;height:18px;background:#eef;transform:rotate(32deg)"></i><i style="left:30px;top:7.5px;width:24px;height:17px;background:#f8f8f6;"></i><i style="left:45px;top:9px;width:6px;height:0.8px;background:#bbb;"></i><i style="left:43px;top:12px;width:8px;height:3px;background:#e8e0c8;"></i><i style="left:36px;top:19px;width:15px;height:1.6px;background:#8a9a4a;"></i><i style="left:0px;top:24.5px;width:57.9px;height:4.4px;background:#b9c0c4;"></i><i style="left:15px;top:25px;width:25px;height:3.9px;background:#f0f0f0;"></i></div>
<div class="th" style="left:587.6px;top:306.4px;width:57.8px;height:28.9px;background:#e7e7ea;"><i style="left:0px;top:0px;width:57.8px;height:28.9px;background:#e6e6ea;"></i><i style="left:0px;top:0px;width:57.8px;height:1.8px;background:#1c1c24;"></i><i style="left:0px;top:1.8px;width:57.8px;height:1.4px;background:#f4f4f4;"></i><i style="left:13px;top:3.2px;width:32px;height:25.7px;background:#fdfdfd;"></i><i style="left:22px;top:5px;width:10px;height:1.6px;background:#556;"></i><i style="left:20px;top:8px;width:14px;height:0.8px;background:#99a;"></i><i style="left:15px;top:11px;width:28px;height:3px;background:#d8e4c8;"></i><i style="left:15px;top:14.5px;width:28px;height:3.5px;background:#b4c8e4;"></i><i style="left:32px;top:14.5px;width:11px;height:3.5px;background:#8aa4d8;"></i><i style="left:15px;top:19px;width:17px;height:2px;background:#7ac060;"></i><i style="left:15px;top:22px;width:28px;height:1.5px;background:#c8e0b8;"></i><i style="left:15px;top:25px;width:17px;height:2.2px;background:#90d070;"></i></div>
<div class="th" style="left:651.2px;top:306px;width:57.8px;height:29.3px;background:#fff;"><i style="left:11px;top:1.8px;width:10px;height:1px;background:#aab;"></i><i style="left:42px;top:1.2px;width:3.5px;height:2px;background:#234;"></i><i style="left:11px;top:5px;width:32px;height:0.8px;background:#bbb;"></i><i style="left:28px;top:7.5px;width:16px;height:0.7px;background:#ccc;"></i><i style="left:11px;top:10px;width:12px;height:0.8px;background:#999;"></i><i style="left:11px;top:12px;width:9px;height:1.6px;background:#dde;"></i><i style="left:11px;top:15px;width:9px;height:0.8px;background:#999;"></i><i style="left:24px;top:16.5px;width:12px;height:1.6px;background:#99a;"></i><i style="left:12px;top:21.5px;width:32px;height:4px;background:#3f6fc0;border-radius:0.8px"></i><i style="left:20px;top:23px;width:15px;height:0.8px;background:#cde;"></i><i style="left:12px;top:26.5px;width:5px;height:0.8px;background:#bbb;"></i></div>
<div class="th" style="left:715.3px;top:303.4px;width:57.7px;height:34.4px;background:#fff;"><i style="left:0px;top:0px;width:57.7px;height:2.2px;background:#23518c;"></i><i style="left:0px;top:2.2px;width:57.7px;height:2.2px;background:#e6eef7;"></i><i style="left:18px;top:2.6px;width:24px;height:1.1px;background:#a8c0d8;"></i><i style="left:1px;top:5.5px;width:7.5px;height:28px;background:#f5f7fa;"></i><i style="left:1.6px;top:6.5px;width:5px;height:0.6px;background:#d4dae4;"></i><i style="left:1.6px;top:8.3px;width:5px;height:0.6px;background:#d4dae4;"></i><i style="left:10px;top:7.3px;width:46px;height:1.9px;background:#f9e4dc;"></i><i style="left:11px;top:7.9px;width:5px;height:0.8px;background:#e0a0a0;"></i><i style="left:11px;top:12.0px;width:5px;height:0.6px;background:#dcdcdc;"></i><i style="left:11px;top:14.3px;width:5px;height:0.6px;background:#dcdcdc;"></i><i style="left:11px;top:16.6px;width:5px;height:0.6px;background:#dcdcdc;"></i><i style="left:11px;top:18.9px;width:5px;height:0.6px;background:#dcdcdc;"></i><i style="left:11px;top:21.2px;width:5px;height:0.6px;background:#dcdcdc;"></i><i style="left:11px;top:23.5px;width:5px;height:0.6px;background:#dcdcdc;"></i><i style="left:11px;top:25.799999999999997px;width:5px;height:0.6px;background:#dcdcdc;"></i><i style="left:11px;top:28.099999999999998px;width:5px;height:0.6px;background:#dcdcdc;"></i><i style="left:11px;top:30.4px;width:5px;height:0.6px;background:#dcdcdc;"></i><i style="left:18px;top:12.0px;width:12px;height:0.6px;background:#e6e6e6;"></i><i style="left:18px;top:14.3px;width:12px;height:0.6px;background:#e6e6e6;"></i><i style="left:18px;top:16.6px;width:12px;height:0.6px;background:#e6e6e6;"></i><i style="left:18px;top:18.9px;width:12px;height:0.6px;background:#e6e6e6;"></i><i style="left:18px;top:21.2px;width:12px;height:0.6px;background:#e6e6e6;"></i><i style="left:18px;top:23.5px;width:12px;height:0.6px;background:#e6e6e6;"></i><i style="left:18px;top:25.799999999999997px;width:12px;height:0.6px;background:#e6e6e6;"></i><i style="left:18px;top:28.099999999999998px;width:12px;height:0.6px;background:#e6e6e6;"></i><i style="left:18px;top:30.4px;width:12px;height:0.6px;background:#e6e6e6;"></i><i style="left:36px;top:12.0px;width:3px;height:0.6px;background:#dcdcdc;"></i><i style="left:36px;top:14.3px;width:3px;height:0.6px;background:#dcdcdc;"></i><i style="left:36px;top:16.6px;width:3px;height:0.6px;background:#dcdcdc;"></i><i style="left:36px;top:18.9px;width:3px;height:0.6px;background:#dcdcdc;"></i><i style="left:36px;top:21.2px;width:3px;height:0.6px;background:#dcdcdc;"></i><i style="left:36px;top:23.5px;width:3px;height:0.6px;background:#dcdcdc;"></i><i style="left:36px;top:25.799999999999997px;width:3px;height:0.6px;background:#dcdcdc;"></i><i style="left:36px;top:28.099999999999998px;width:3px;height:0.6px;background:#dcdcdc;"></i><i style="left:36px;top:30.4px;width:3px;height:0.6px;background:#dcdcdc;"></i><i style="left:42px;top:12.0px;width:3px;height:0.6px;background:#dcdcdc;"></i><i style="left:42px;top:14.3px;width:3px;height:0.6px;background:#dcdcdc;"></i><i style="left:42px;top:16.6px;width:3px;height:0.6px;background:#dcdcdc;"></i><i style="left:42px;top:18.9px;width:3px;height:0.6px;background:#dcdcdc;"></i><i style="left:42px;top:21.2px;width:3px;height:0.6px;background:#dcdcdc;"></i><i style="left:42px;top:23.5px;width:3px;height:0.6px;background:#dcdcdc;"></i><i style="left:42px;top:25.799999999999997px;width:3px;height:0.6px;background:#dcdcdc;"></i><i style="left:42px;top:28.099999999999998px;width:3px;height:0.6px;background:#dcdcdc;"></i><i style="left:42px;top:30.4px;width:3px;height:0.6px;background:#dcdcdc;"></i><i style="left:48px;top:12.0px;width:6px;height:0.6px;background:#e6e6e6;"></i><i style="left:48px;top:14.3px;width:6px;height:0.6px;background:#e6e6e6;"></i><i style="left:48px;top:16.6px;width:6px;height:0.6px;background:#e6e6e6;"></i><i style="left:48px;top:18.9px;width:6px;height:0.6px;background:#e6e6e6;"></i><i style="left:48px;top:21.2px;width:6px;height:0.6px;background:#e6e6e6;"></i><i style="left:48px;top:23.5px;width:6px;height:0.6px;background:#e6e6e6;"></i><i style="left:48px;top:25.799999999999997px;width:6px;height:0.6px;background:#e6e6e6;"></i><i style="left:48px;top:28.099999999999998px;width:6px;height:0.6px;background:#e6e6e6;"></i><i style="left:48px;top:30.4px;width:6px;height:0.6px;background:#e6e6e6;"></i><i style="left:34px;top:11px;width:0.5px;height:21px;background:#ececec;"></i><i style="left:46px;top:11px;width:0.5px;height:21px;background:#ececec;"></i></div>
<div class="th" style="left:12.6px;top:365.7px;width:57.8px;height:28.3px;background:#fcfcfc;"><i style="left:0px;top:0px;width:57.8px;height:2.2px;background:#f2f2f2;"></i><i style="left:1px;top:2.2px;width:3px;height:1.2px;background:#555;"></i><i style="left:11px;top:2.2px;width:0.5px;height:26px;background:#ddd;"></i><i style="left:22px;top:2.2px;width:0.5px;height:26px;background:#e4e4e4;"></i><i style="left:30px;top:2.2px;width:0.5px;height:26px;background:#e8e8e8;"></i><i style="left:0px;top:5.0px;width:57.8px;height:0.6px;background:#f0f0f0;"></i><i style="left:0px;top:7.5px;width:57.8px;height:0.6px;background:#f0f0f0;"></i><i style="left:0px;top:10.0px;width:57.8px;height:0.6px;background:#f0f0f0;"></i><i style="left:0px;top:12.5px;width:57.8px;height:0.6px;background:#f0f0f0;"></i><i style="left:0px;top:15.0px;width:57.8px;height:0.6px;background:#f0f0f0;"></i><i style="left:0px;top:17.5px;width:57.8px;height:0.6px;background:#f0f0f0;"></i><i style="left:0px;top:20.0px;width:57.8px;height:0.6px;background:#f0f0f0;"></i><i style="left:0px;top:22.5px;width:57.8px;height:0.6px;background:#f0f0f0;"></i><i style="left:0px;top:25.0px;width:57.8px;height:0.6px;background:#f0f0f0;"></i></div>
<div class="th" style="left:76.7px;top:357.5px;width:57.4px;height:44.6px;background:#4a4e48;"><svg style="left:0;top:0" width="57.4" height="44.6" viewBox="0 0 57.4 44.6"><defs><linearGradient id="mg" x1="0" x2="1"><stop offset="0" stop-color="#4c4e4a"/><stop offset="0.3" stop-color="#62645e"/><stop offset="0.62" stop-color="#3c4438"/><stop offset="1" stop-color="#2c3628"/></linearGradient></defs><rect width="57.4" height="44.6" fill="url(#mg)"/><rect x="0" y="0" width="8" height="30" fill="#3a3c3a"/><ellipse cx="48" cy="14" rx="5" ry="7" fill="#6e7868"/><ellipse cx="53" cy="27" rx="4" ry="6" fill="#7c8476"/><ellipse cx="42" cy="6" rx="5" ry="3" fill="#56604e"/><ellipse cx="47" cy="30" rx="4" ry="5" fill="#1e261c"/><path d="M1.5 44.6 Q3 33 12 30 L22 26.4 L38 26.6 L47 30 Q54 33 55 44.6 Z" fill="#6f778a"/><path d="M16 44.6 Q15 33 19 27.5 L25 27 L24 44.6 Z" fill="#1c1e2c"/><path d="M24 30 L36 30 L33 36 L26 36 Z" fill="#23252f"/><path d="M20.4 22 Q19.6 12.5 29 12 Q38.6 12.2 38.2 22 Q38 29.5 33.5 32.4 Q29.5 34.4 25.5 32.4 Q20.8 29.5 20.4 22 Z" fill="#c9957a"/><path d="M17.5 17.5 Q15.8 8.4 28 8 Q41 8.2 40.5 17 L38.4 19 Q38 13.6 33 13.4 Q27 15 22 13.8 Q20.4 15 20.4 19.4 Z" fill="#3a2519"/><path d="M23 19.6 L27 19.2 M31 19.2 L35.5 19.8" stroke="#4a2e22" stroke-width="0.9"/><ellipse cx="25" cy="21.4" rx="1.3" ry="0.7" fill="#3a2a26"/><ellipse cx="33.2" cy="21.4" rx="1.3" ry="0.7" fill="#3a2a26"/><path d="M27.6 28.4 Q29.4 27.6 31.4 28.4" stroke="#8a5044" stroke-width="0.9" fill="none"/><path d="M29 22 L28.4 25.8 L30.4 25.8" stroke="#a87860" stroke-width="0.6" fill="none"/></svg><b style="left:-11.3px;top:0.9px;width:80px;text-align:center;font-size:9px;line-height:9px;color:#fff;transform:scaleX(.69);-webkit-text-stroke:0.35px #fff;text-shadow:0 0 1px #000,0 0 1px #000,0 0 1.5px #000">ITS DEAD</b><b style="left:-11.6px;top:34.8px;width:80px;text-align:center;font-size:9px;line-height:9px;color:#fff;transform:scaleX(.7);-webkit-text-stroke:0.35px #fff;text-shadow:0 0 1px #000,0 0 1px #000,0 0 1.5px #000">JIM</b></div>
<div class="th" style="left:140.3px;top:365.7px;width:57.7px;height:28.3px;background:#fbfbfc;"><i style="left:0px;top:0px;width:57.7px;height:1.8px;background:#f0f0f2;"></i><i style="left:12px;top:4px;width:20px;height:0.7px;background:#e2e2e8;"></i><i style="left:12px;top:7.0px;width:32px;height:0.7px;background:#ececf0;"></i><i style="left:12px;top:9.6px;width:32px;height:0.7px;background:#ececf0;"></i><i style="left:12px;top:12.2px;width:32px;height:0.7px;background:#ececf0;"></i><i style="left:12px;top:14.8px;width:32px;height:0.7px;background:#ececf0;"></i><i style="left:12px;top:17.4px;width:32px;height:0.7px;background:#ececf0;"></i><i style="left:12px;top:20.0px;width:32px;height:0.7px;background:#ececf0;"></i><i style="left:15px;top:24.5px;width:8px;height:2.2px;background:#5a7ac8;border-radius:1px"></i><i style="left:40px;top:24px;width:2px;height:2px;background:#dde;"></i><i style="left:1px;top:3px;width:8px;height:24px;background:#f6f6f8;"></i></div>
<div class="th" style="left:204.3px;top:365px;width:57.7px;height:29px;background:#fbfbfc;"><i style="left:0px;top:0px;width:57.7px;height:1.8px;background:#f0f0f2;"></i><i style="left:15px;top:4.5px;width:9px;height:3px;background:#4a7ad0;border-radius:1.5px;transform:rotate(8deg)"></i><i style="left:1px;top:3px;width:8px;height:25px;background:#f6f6f8;"></i><i style="left:12px;top:10.0px;width:26px;height:0.7px;background:#ececf0;"></i><i style="left:12px;top:12.6px;width:26px;height:0.7px;background:#ececf0;"></i><i style="left:12px;top:15.2px;width:26px;height:0.7px;background:#ececf0;"></i><i style="left:12px;top:17.8px;width:26px;height:0.7px;background:#ececf0;"></i><i style="left:12px;top:20.4px;width:26px;height:0.7px;background:#ececf0;"></i><i style="left:12px;top:23.0px;width:26px;height:0.7px;background:#ececf0;"></i><i style="left:41px;top:5.0px;width:3px;height:0.8px;background:#dde;"></i><i style="left:41px;top:7.6px;width:3px;height:0.8px;background:#dde;"></i><i style="left:41px;top:10.2px;width:3px;height:0.8px;background:#dde;"></i><i style="left:41px;top:12.8px;width:3px;height:0.8px;background:#dde;"></i><i style="left:47px;top:4px;width:0.5px;height:22px;background:#e8e8ea;"></i></div>
<div class="th" style="left:268.4px;top:370.7px;width:57.5px;height:17.3px;background:#2a7ad8;"><i style="left:0px;top:0px;width:30px;height:17.3px;background:#2a78d8;background:linear-gradient(90deg,#2f86e4,#2a7ad8 35%,#1d5cc2 75%,#2448a0)"></i><i style="left:0.5px;top:6.5px;width:4.5px;height:10.8px;background:#1a2a4c;"></i><i style="left:18.5px;top:5.5px;width:5.5px;height:5px;background:#62a8f4;"></i><i style="left:30px;top:0px;width:27.5px;height:17.3px;background:#0c0c0c;"></i><i style="left:44px;top:3.4px;width:13.5px;height:10.4px;background:#8a8f80;"></i><i style="left:30px;top:0.6px;width:16px;height:16px;background:#fafafa;border-radius:3.5px"></i><i style="left:35px;top:5px;width:6px;height:4px;background:#2a4a9a;border-radius:1px"></i><i style="left:36.5px;top:6.2px;width:3px;height:1.4px;background:#cdd8f0;"></i><i style="left:35px;top:10.5px;width:6px;height:1px;background:#777;"></i><i style="left:35.5px;top:12.6px;width:5px;height:0.9px;background:#999;"></i></div>
<div class="th" style="left:332px;top:363.7px;width:57.8px;height:31.9px;background:#060607;"><i style="left:0px;top:0px;width:57.8px;height:31.9px;background:#070708;"></i><i style="left:0.5px;top:2px;width:1.5px;height:1.5px;background:#bbb;border-radius:1px"></i><i style="left:4px;top:2.2px;width:7px;height:0.8px;background:#6a6a6a;"></i><i style="left:41px;top:2px;width:6px;height:0.7px;background:#444;"></i><i style="left:48px;top:6px;width:7px;height:0.7px;background:#3a3a3a;"></i><i style="left:8px;top:9px;width:20px;height:9px;background:#101012;border-radius:4px"></i><i style="left:6px;top:20.5px;width:8px;height:0.9px;background:#6a6a6a;"></i><i style="left:40px;top:16px;width:10px;height:0.8px;background:#444;"></i></div>
<div class="th" style="left:395.8px;top:363.7px;width:57.8px;height:31.9px;background:#060607;"><i style="left:0px;top:0px;width:57.8px;height:31.9px;background:#070708;"></i><i style="left:0.5px;top:2px;width:1.5px;height:1.5px;background:#bbb;border-radius:1px"></i><i style="left:4px;top:2.2px;width:7px;height:0.8px;background:#6a6a6a;"></i><i style="left:18px;top:5px;width:8px;height:0.8px;background:#5a5a5a;"></i><i style="left:41px;top:2px;width:6px;height:0.7px;background:#444;"></i><i style="left:52px;top:5px;width:3px;height:0.7px;background:#3a3a3a;"></i><i style="left:9px;top:8.5px;width:16px;height:0.8px;background:#5e5e5e;"></i><i style="left:9px;top:10.4px;width:16px;height:0.8px;background:#5e5e5e;"></i><i style="left:9px;top:12.3px;width:16px;height:0.8px;background:#5e5e5e;"></i><i style="left:9px;top:14.2px;width:16px;height:0.8px;background:#5e5e5e;"></i><i style="left:9px;top:16.1px;width:16px;height:0.8px;background:#5e5e5e;"></i><i style="left:9px;top:18.0px;width:16px;height:0.8px;background:#5e5e5e;"></i><i style="left:9px;top:19.9px;width:16px;height:0.8px;background:#5e5e5e;"></i><i style="left:37px;top:10px;width:11px;height:5px;background:#141418;"></i><i style="left:46px;top:11.5px;width:1.5px;height:1.5px;background:#bbb;"></i><i style="left:37px;top:16.5px;width:11px;height:5px;background:#161a1c;"></i><i style="left:46px;top:18px;width:1.5px;height:1.5px;background:#bbb;"></i><i style="left:37px;top:23.5px;width:12px;height:1.4px;background:#2f8a92;"></i></div>
<div class="th" style="left:460px;top:365px;width:57.7px;height:29px;background:#fff;"><i style="left:0px;top:0px;width:57.7px;height:29px;background:#fff;border:0.5px solid #d4d4d4"></i><i style="left:1px;top:1px;width:5px;height:0.7px;background:#bbb;"></i><i style="left:24px;top:1.2px;width:9px;height:0.7px;background:#aaa;"></i><i style="left:14px;top:6.5px;width:28px;height:0.6px;background:#b4b4b4;transform:rotate(14deg)"></i><i style="left:16px;top:9.3px;width:26px;height:0.6px;background:#b4b4b4;transform:rotate(14deg)"></i><i style="left:26px;top:6px;width:14px;height:0.5px;background:#ccc;transform:rotate(-14deg)"></i><i style="left:19px;top:11px;width:2.2px;height:2.8px;background:#bbb;transform:rotate(14deg)"></i><i style="left:13px;top:17.5px;width:31px;height:0.7px;background:#b4b4b4;"></i><i style="left:13px;top:19.3px;width:31px;height:0.7px;background:#c8c8c8;"></i><i style="left:0px;top:24.5px;width:57.7px;height:0.5px;background:#e4e4e4;"></i><i style="left:15px;top:25.5px;width:24px;height:1.4px;background:#ececec;"></i><i style="left:39px;top:25.3px;width:3.5px;height:2px;background:#222;"></i></div>
<div class="th" style="left:523.7px;top:365px;width:57.9px;height:29px;background:#fff;"><i style="left:0px;top:0px;width:57.9px;height:29px;background:#fff;border:0.5px solid #d4d4d4"></i><i style="left:1px;top:1px;width:5px;height:0.7px;background:#bbb;"></i><i style="left:24px;top:1.2px;width:9px;height:0.7px;background:#aaa;"></i><i style="left:24.5px;top:8.4px;width:7.4px;height:3.8px;background:#c8c8c8;transform:skewX(-25deg) rotate(8deg);border:0.5px solid #777"></i><i style="left:24px;top:12.4px;width:8px;height:1.2px;background:#999;transform:skewX(-25deg) rotate(8deg)"></i><i style="left:17px;top:15.4px;width:22px;height:0.8px;background:#999;"></i><i style="left:20px;top:17.2px;width:16px;height:0.6px;background:#c4c4c4;"></i><i style="left:25px;top:24.5px;width:7px;height:0.6px;background:#c4c4c4;"></i></div>
<div class="th" style="left:587.6px;top:366.8px;width:57.8px;height:24.8px;background:#fff;"><i style="left:5px;top:3px;width:6px;height:0.7px;background:#ccc;"></i><i style="left:5px;top:7px;width:11px;height:0.9px;background:#a4a4a4;"></i><i style="left:5px;top:9.6px;width:22px;height:0.7px;background:#d4d4d4;"></i><i style="left:5px;top:12px;width:20px;height:0.7px;background:#e0e0e0;"></i><i style="left:47px;top:8px;width:1px;height:1px;background:#d0d0d0;"></i><i style="left:47px;top:12px;width:1px;height:1px;background:#d0d0d0;"></i><i style="left:5px;top:17.5px;width:6px;height:0.7px;background:#d4d4d4;"></i><i style="left:41px;top:21px;width:7px;height:0.8px;background:#d4d4d4;"></i></div>
<div class="th" style="left:651.6px;top:364.8px;width:57.4px;height:28.4px;background:#fff;"><i style="left:0px;top:0px;width:57.4px;height:28.4px;background:#fff;border:0.5px solid #dcdcdc"></i><i style="left:0px;top:0px;width:57.4px;height:1.8px;background:#f4f4f6;"></i><i style="left:0.5px;top:1.8px;width:10px;height:26px;background:#f1f1f3;"></i><i style="left:45.5px;top:1.8px;width:11.4px;height:26px;background:#f1f1f3;"></i><i style="left:11.5px;top:2.6px;width:1.4px;height:1.4px;background:#aab;"></i><i style="left:14px;top:3px;width:8px;height:0.6px;background:#d8d8d8;"></i><i style="left:41px;top:2px;width:3px;height:1.4px;background:#456;"></i><i style="left:11.5px;top:7px;width:1.6px;height:1.6px;background:#889;border-radius:1px"></i><i style="left:14px;top:7.3px;width:7px;height:0.6px;background:#d0d0d0;"></i><i style="left:35px;top:7px;width:1.6px;height:1.6px;background:#b4b4c0;border-radius:1px"></i><i style="left:38px;top:7.3px;width:5px;height:0.6px;background:#dcdcdc;"></i><i style="left:11.5px;top:10.5px;width:1.6px;height:1.6px;background:#889;border-radius:1px"></i><i style="left:14px;top:10.8px;width:7px;height:0.6px;background:#d0d0d0;"></i><i style="left:35px;top:10.5px;width:1.6px;height:1.6px;background:#b4b4c0;border-radius:1px"></i><i style="left:38px;top:10.8px;width:5px;height:0.6px;background:#dcdcdc;"></i><i style="left:11.5px;top:16.5px;width:1.6px;height:1.6px;background:#889;border-radius:1px"></i><i style="left:14px;top:16.8px;width:7px;height:0.6px;background:#d0d0d0;"></i><i style="left:35px;top:16.5px;width:1.6px;height:1.6px;background:#b4b4c0;border-radius:1px"></i><i style="left:38px;top:16.8px;width:5px;height:0.6px;background:#dcdcdc;"></i><i style="left:11.5px;top:21px;width:1.6px;height:1.6px;background:#889;border-radius:1px"></i><i style="left:14px;top:21.3px;width:7px;height:0.6px;background:#d0d0d0;"></i><i style="left:35px;top:21px;width:1.6px;height:1.6px;background:#b4b4c0;border-radius:1px"></i><i style="left:38px;top:21.3px;width:5px;height:0.6px;background:#dcdcdc;"></i><i style="left:14px;top:24.0px;width:20px;height:0.6px;background:#e6e6e6;"></i><i style="left:14px;top:25.6px;width:20px;height:0.6px;background:#e6e6e6;"></i></div>
<div class="th" style="left:715.3px;top:363.3px;width:57.3px;height:33.3px;background:#0c0610;"><i style="left:0px;top:0px;width:57.7px;height:44.8px;background:#0a060e;"></i><i style="left:3.4px;top:2px;width:9.3px;height:24.6px;background:#5a5560;background:repeating-linear-gradient(#6a6570 0 1.5px,#3a3540 1.5px 3px)"></i><i style="left:47px;top:3px;width:8px;height:20px;background:#3a2a30;background:repeating-linear-gradient(#5a3a40 0 2px,#2a1a20 2px 4px)"></i><i style="left:13px;top:6px;width:33px;height:18px;background:#4a2a70;background:linear-gradient(#3a2058,#5a3488 50%,#3a2058)"></i><i style="left:16px;top:8px;width:6px;height:8px;background:#7a58b0;border:0.5px solid #a088d0"></i><i style="left:24px;top:8.5px;width:5px;height:7px;background:#6a48a0;"></i><i style="left:30px;top:8.5px;width:5px;height:7px;background:#6a48a0;"></i><i style="left:36px;top:8.5px;width:5px;height:7px;background:#6a48a0;"></i><i style="left:25px;top:18px;width:6px;height:3.5px;background:#b0a0c8;"></i><i style="left:13px;top:24px;width:33px;height:4px;background:#2a1840;"></i><i style="left:44px;top:26px;width:6px;height:4px;background:#7a3a40;"></i></div>
</div>
<div id="status" class="abs"><span id="st1" style="left:379.7px;top:0.5px;font-size:4.6px;line-height:6.5px;color:#fff;font-weight:bold;white-space:pre">108 pictures</span><span id="st2" style="left:412.5px;top:0.5px;font-size:4.6px;line-height:6.5px;color:#fff;font-weight:bold;white-space:pre">01 February 2024 to 24 February 2024</span><span id="st3" style="left:501.5px;top:0.5px;font-size:4.6px;line-height:6.5px;color:#fff;font-weight:bold;white-space:pre">21.1 MB on disk</span></div>
<div id="bottom" class="abs">
<div style="left:322px;top:0;width:593px;height:16.5px;background:#eeeeee"></div>
<div style="left:322px;top:16.5px;width:593px;height:0.8px;background:#dedede"></div>
<div style="left:3px;top:3.7px;width:302px;height:35.6px;background:#f7f7f7;border:0.8px solid #d2d2d2;border-radius:1.5px"></div>
<div style="left:143.5px;top:9.5px;width:21px;height:22.5px;background:#fdfdfd;border:0.9px solid #3a3a48"></div>
<div style="left:143.5px;top:9.5px;width:21px;height:6.5px;background:#1f2a4a"></div>
<div style="left:120px;top:18.3px;width:67.5px;height:7px;background:#6f90b6;color:#fff;font-weight:bold;font-size:4.7px;line-height:7px;text-align:center;white-space:nowrap">Folder Selected - 108 photos</div>
<div class="tb" style="left:307px;top:4.5px;width:14.5px;height:9.5px;background:#e4e4e4;border-color:#d0d0d0"></div>
<div style="left:313px;top:6.5px;width:2px;height:5px;background:#3a9a3a;transform:rotate(20deg);border-radius:1px"></div>
<div style="left:312.5px;top:17.5px;width:4px;height:4px;border:0.6px solid #aaa;border-radius:2px;background:#f6f6f6"></div>
<div class="tb" style="left:307px;top:27.5px;width:14.5px;height:11px;background:#e6e6e6;border-color:#d0d0d0"></div>
<div style="left:309.5px;top:30.0px;width:5.5px;height:6px;background:#3b55a8;border-radius:0.5px"></div><div style="left:310.5px;top:31.0px;width:2.5px;height:2.5px;background:#8aa0e0"></div>
<div style="left:316.6px;top:32.5px;border-top:2px solid #333;border-left:1.4px solid transparent;border-right:1.4px solid transparent"></div>
<div style="left:339px;top:6.5px;width:14px;height:5px;background:#e8e8e8;border-radius:1px"></div>
<div style="left:358.5px;top:5.0px;width:5px;height:6px;background:#e3e3e3;border-radius:2px 2px 0 0"></div>
<div style="left:375.5px;top:5.0px;width:5px;height:6px;background:#e3e3e3;border-radius:2px 2px 0 0"></div>
<div style="left:331.8px;top:21.5px;width:67.5px;height:17px;background:linear-gradient(#4a9a32,#3a8526);border:0.8px solid #33751f;border-radius:2px;color:#fff;font-weight:bold;font-size:4.65px;line-height:4.8px;text-align:center;padding-top:3.4px;padding-left:12.5px">Upload to Google<br>Photos</div>
<svg style="left:409.5px;top:22.0px" width="8" height="6.5" viewBox="0 0 8 6.5"><rect x="0.5" y="0.5" width="7" height="5.2" fill="#f8f8f8" stroke="#555" stroke-width="0.7"/><path d="M0.8 0.8 L4 3.6 L7.2 0.8" fill="none" stroke="#555" stroke-width="0.7"/></svg>
<div style="left:401.5px;top:31.3px;width:24px;text-align:center;font-size:4.6px;line-height:6px;color:#555">Email</div>
<svg style="left:435.5px;top:21.8px" width="8" height="7" viewBox="0 0 8 7"><rect x="2" y="0.5" width="4" height="2" fill="#444"/><rect x="0.5" y="2.2" width="7" height="3" rx="0.8" fill="#333"/><rect x="2" y="4.2" width="4" height="2.3" fill="#f4f4f4" stroke="#444" stroke-width="0.5"/></svg>
<div style="left:427.4px;top:31.3px;width:24px;text-align:center;font-size:4.6px;line-height:6px;color:#555">Print</div>
<svg style="left:462px;top:21.8px" width="8" height="7" viewBox="0 0 8 7"><path d="M0.5 1 L3 1 L3.8 2 L7.5 2 L7.5 6.3 L0.5 6.3 Z" fill="#2f4a8a"/><path d="M4 3 L4 5.3 M3 4.3 L4 5.4 L5 4.3" stroke="#fff" stroke-width="0.7" fill="none"/></svg>
<div style="left:454px;top:31.3px;width:24px;text-align:center;font-size:4.6px;line-height:6px;color:#555">Export</div>
<div style="left:710.5px;top:4.3px;width:7.5px;height:5px;background:#5a86c8;border:0.6px solid #2f4f8a;border-radius:1px"></div><div style="left:709.5px;top:7.0px;width:5px;height:2.5px;background:#9ab8e8;border:0.5px solid #3a5a9a"></div>
<div style="left:725px;top:6.7px;width:56.5px;height:1.2px;background:#c4c4c4;border-radius:1px"></div>
<div style="left:744.5px;top:3.2px;width:4.5px;height:8px;background:linear-gradient(#fdfdfd,#d8d8d8);border:0.7px solid #9a9a9a;border-radius:1.5px"></div>
<div style="left:793px;top:2.5px;width:114.6px;height:9.8px;background:linear-gradient(#fafafa,#dadada);border:0.8px solid #bdbdbd;border-radius:1.5px"></div>
<div style="left:821.65px;top:3.0px;width:0.8px;height:8.8px;background:#c4c4c4"></div>
<div style="left:850.3px;top:3.0px;width:0.8px;height:8.8px;background:#c4c4c4"></div>
<div style="left:878.95px;top:3.0px;width:0.8px;height:8.8px;background:#c4c4c4"></div>
<svg style="left:804px;top:3.7px" width="7" height="7.5" viewBox="0 0 7 7.5"><circle cx="3.5" cy="2.3" r="1.9" fill="#3b3f9a"/><path d="M0.4 7.3 Q0.4 4 3.5 4 Q6.6 4 6.6 7.3 Z" fill="#3b3f9a"/></svg>
<svg style="left:833.5px;top:3.5px" width="6" height="8" viewBox="0 0 6 8"><path d="M3 7.6 L1 3.6 A2.3 2.3 0 1 1 5 3.6 Z" fill="#c02a2a"/><circle cx="3" cy="2.6" r="0.8" fill="#6a1010"/></svg>
<div style="left:861px;top:4.9px;width:7.5px;height:5px;background:#ead9a4;border:0.5px solid #cbb77a;border-radius:2.5px"></div>
<svg style="left:889.5px;top:3.7px" width="7.4" height="7.4" viewBox="0 0 8 8"><circle cx="4" cy="4" r="3.6" fill="#2f4a9a" stroke="#223a7a" stroke-width="0.5"/><rect x="3.4" y="3.3" width="1.2" height="2.9" fill="#fff"/><rect x="3.4" y="1.7" width="1.2" height="1.1" fill="#fff"/></svg>
</div>
<div style="left:787.2px;top:432.1px;width:118.2px;height:22.4px;background:rgba(128,129,127,.94);border-top:0.7px solid #909090">
</div>
<div style="left:790.8px;top:437.4px;width:9.4px;height:9.2px;background:#fafafa"></div>
<svg style="left:792px;top:438.5px" width="7" height="7" viewBox="0 0 7 7"><path d="M3.5 3.5 L0.6 1.2 L3 0.3 Z" fill="#d03a2a"/><path d="M3.5 3.5 L6.4 1.2 L6.8 4 Z" fill="#3a6ad0"/><path d="M3.5 3.5 L5.6 6.6 L2.5 6.8 Z" fill="#e8b820"/><path d="M3.5 3.5 L0.3 5.6 L0.3 2.4 Z" fill="#3a9a3a"/><path d="M3.5 3.5 L3.6 0.3 L6 1 Z" fill="#8a3ab0"/><circle cx="3.5" cy="3.5" r="0.9" fill="#fff"/></svg>
<div style="left:806.5px;top:434.6px;font-size:6px;line-height:7px;font-weight:bold;color:#f4f4f4;white-space:nowrap;transform:scaleX(.93);transform-origin:0 0">tablet camera backup</div>
<div style="left:808px;top:443.9px;font-size:4.6px;line-height:6px;font-weight:bold;color:#f0f0f0;white-space:nowrap">VID_20190524_161314.mp4</div>
<div style="left:884.7px;top:437px;width:18.6px;height:10.8px;background:linear-gradient(100deg,#a89078,#6a5040 40%,#d8c0a8 60%,#8a7868);overflow:hidden"><i style="position:absolute;left:3px;top:1px;width:6px;height:7px;background:#5a4034;border-radius:3px"></i><i style="position:absolute;left:10px;top:3px;width:5px;height:6px;background:#eadccc;border-radius:2px"></i></div>
</body></html>
